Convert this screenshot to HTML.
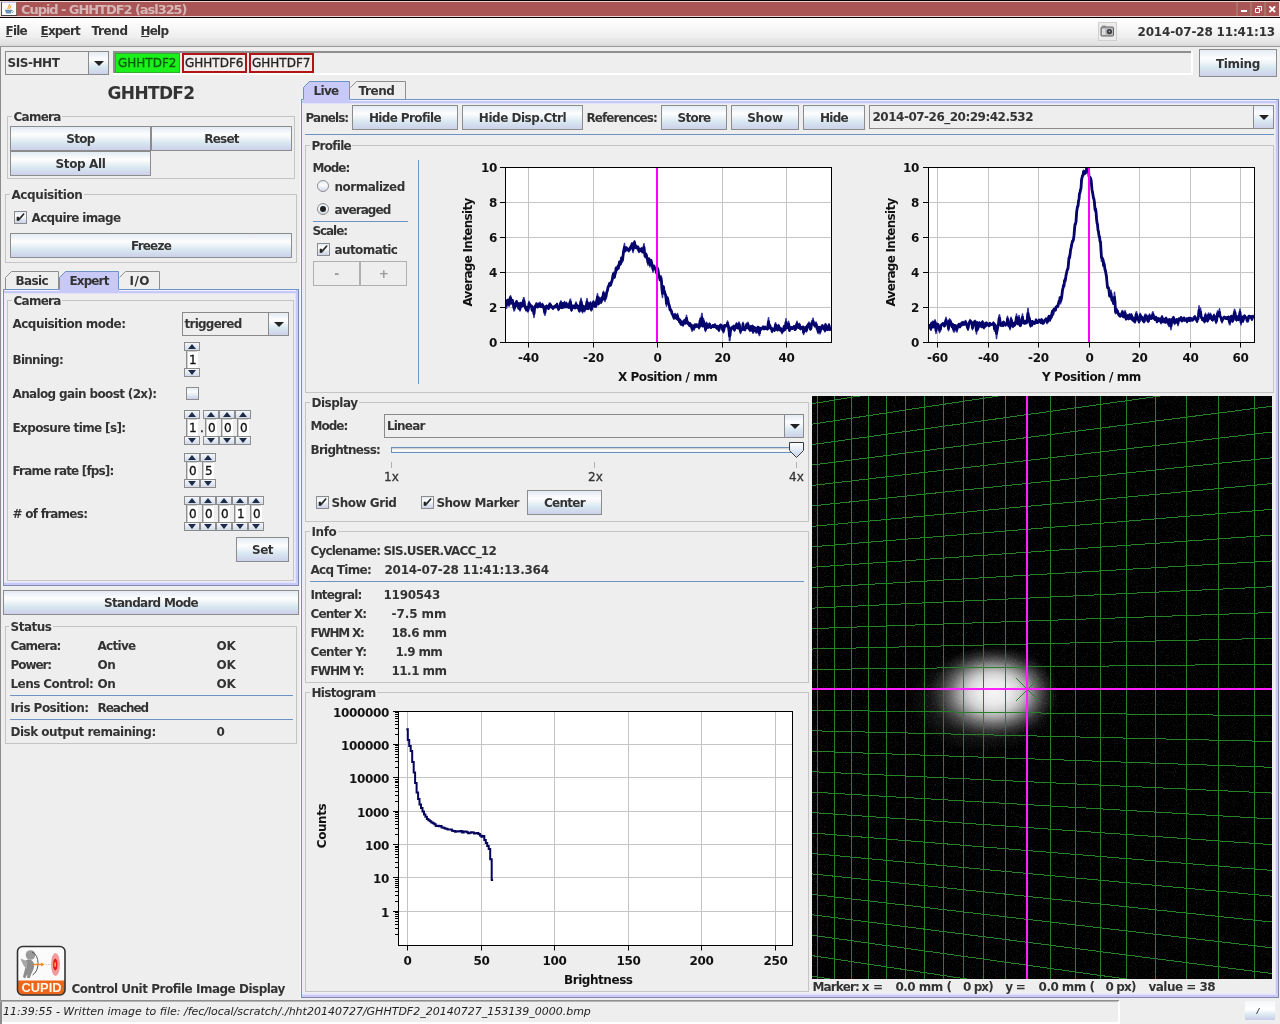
<!DOCTYPE html>
<html><head><meta charset="utf-8"><title>Cupid - GHHTDF2 (asl325)</title>
<style>
html,body{margin:0;padding:0;background:#eee;}
body{width:1280px;height:1024px;overflow:hidden;font-family:'DejaVu Sans','Liberation Sans',sans-serif;font-size:12px;font-weight:bold;color:#333;}
#root{will-change:transform;position:relative;width:1280px;height:1024px;overflow:hidden;background:#eee;}
#root div,#root svg{position:absolute;box-sizing:content-box;}
.t{white-space:pre;letter-spacing:-0.5px;line-height:normal;}
.btn{border:1px solid #8c8c8c;background:linear-gradient(to bottom,#e3ebf4 0%,#fdfdfe 32%,#eef3f8 50%,#d9e9f1 66%,#cdd0ea 100%);}
.btn.dis{border-color:#b0b0b0;background:#eee;}
.cbtn{background:linear-gradient(to bottom,#e3ebf4 0%,#fdfdfe 32%,#eef3f8 50%,#d9e9f1 66%,#cdd0ea 100%);}
.sbtn{border:1px solid #8c8c8c;background:linear-gradient(to bottom,#f4f7fa,#d4dcea);}
.cb{border:1px solid #8c8c8c;background:linear-gradient(to bottom,#e3ebf4 0%,#fdfdfe 35%,#dde6f0 70%,#cdd0ea 100%);}
.rb{border:1px solid #8c8c8c;border-radius:50%;background:linear-gradient(to bottom,#e3ebf4 0%,#fdfdfe 40%,#d0d8ea 100%);}

</style></head>
<body>
<div id="root">
<div style="left:0px;top:0px;width:1280px;height:1px;background:#000;"></div>
<div style="left:0px;top:1px;width:1280px;height:1px;background:#f0d2d2;"></div>
<div style="left:0px;top:2px;width:1280px;height:14px;background:#aa5555;"></div>
<div style="left:0px;top:16px;width:1280px;height:1px;background:#f0d2d2;"></div>
<div style="left:0px;top:17px;width:1280px;height:1px;background:#000;"></div>
<div style="left:0px;top:1px;width:1px;height:16px;background:#efe0d8;"></div>
<div style="left:1px;top:2px;width:16px;height:14px;background:#fdfdfd;"></div>
<div style="left:1px;top:2px;width:1px;height:14px;background:#555;"></div>
<div style="left:16px;top:2px;width:1px;height:14px;background:#8a6a58;"></div>
<div style="left:1px;top:15px;width:16px;height:1px;background:#444;"></div>
<div style="left:2px;top:2px;width:14px;height:1px;background:#c8c8ee;"></div>
<svg style="left:2px;top:3px" width="14" height="12" viewBox="0 0 14 12"><path d="M3.2 7.2 h6.4 l-0.800 3.400 h-4.800 z" fill="#6a94b4"/><path d="M9.600 7.600 c2.400 -0.200 2.400 2.200 0 2" fill="none" stroke="#6a94b4" stroke-width="0.9"/><path d="M3 7.300 h7" stroke="#4a7494" stroke-width="0.8"/><path d="M6.200 6.400 C4.600 4.800 8 3.600 7.400 1 M7.800 6 C7.200 4.800 9.400 3.800 8.800 2.400" fill="none" stroke="#f0a030" stroke-width="1.1"/></svg>
<div class="t" style="left:21.0px;top:2px;font-size:13px;color:#d6b6b6;letter-spacing:-1.056px;">Cupid - GHHTDF2 (asl325)</div>
<div style="left:1236px;top:2px;width:2px;height:14px;background:#a87868;opacity:0.9;"></div>
<div style="left:1250px;top:2px;width:2px;height:14px;background:#a87868;opacity:0.9;"></div>
<div style="left:1264px;top:2px;width:2px;height:14px;background:#a87868;opacity:0.9;"></div>
<div style="left:1279px;top:1px;width:1px;height:16px;background:#efe0d8;"></div>
<div style="left:1241px;top:10px;width:6px;height:2px;background:#fff;"></div>
<svg style="left:1255px;top:6px" width="7" height="7" viewBox="0 0 7 7"><path d="M2.500 1.500 v-1 h4 v4 h-1 M0.500 2.500 h4 v4 h-4 z" fill="none" stroke="#fff" stroke-width="1"/></svg>
<svg style="left:1269px;top:6px" width="7" height="7" viewBox="0 0 7 7"><path d="M1.100 1.100 L5.400 5.400 M5.400 1.100 L1.100 5.400" stroke="#fff" stroke-width="1.9" stroke-linecap="square"/></svg>
<div style="left:0px;top:18px;width:1280px;height:27px;background:linear-gradient(to bottom,#ffffff 0%,#f8f8f8 35%,#eeeeee 70%,#dfdfdf 100%);"></div>
<div style="left:0px;top:45px;width:1280px;height:1px;background:#d8d8d8;"></div>
<div style="left:0px;top:46px;width:1280px;height:1px;background:#9a9a9a;"></div>
<div class="t" style="left:5.5px;top:24px;font-size:12px;letter-spacing:-0.791px;">File</div>
<div class="t" style="left:40.5px;top:24px;font-size:12px;letter-spacing:-0.821px;">Expert</div>
<div class="t" style="left:91.5px;top:24px;font-size:12px;letter-spacing:-0.372px;">Trend</div>
<div class="t" style="left:140.5px;top:24px;font-size:12px;letter-spacing:-0.798px;">Help</div>
<div style="left:6px;top:36px;width:6px;height:1px;background:#333;"></div>
<div style="left:41px;top:36px;width:7px;height:1px;background:#333;"></div>
<div style="left:141px;top:36px;width:8px;height:1px;background:#333;"></div>
<div style="left:1098px;top:22px;width:17px;height:17px;border:1px solid #cfcfcf;background:#ececec;"></div>
<svg style="left:1100px;top:24px" width="15" height="14" viewBox="0 0 15 14"><rect x="1" y="3" width="12.5" height="9" rx="1" fill="#b8b8b8" stroke="#555" stroke-width="0.9"/><rect x="2" y="1.6" width="4" height="2" fill="#888"/><circle cx="9.4" cy="7.6" r="2.6" fill="#333"/><circle cx="9.4" cy="7.6" r="1" fill="#9ab"/><rect x="2" y="5" width="3.2" height="6" fill="#ddd"/></svg>
<div class="t" style="left:1137.5px;top:25px;font-size:12px;letter-spacing:-0.165px;">2014-07-28 11:41:13</div>
<div style="left:0px;top:47px;width:1px;height:977px;background:#8c8c8c;"></div>
<div style="left:5px;top:51px;width:102px;height:22px;border:1px solid #8a8a8a;background:#eee;"></div>
<div class="cbtn" style="left:89px;top:52px;width:19px;height:22px;"></div>
<div style="left:88px;top:52px;width:1px;height:22px;background:#8a8a8a;"></div>
<svg style="position:absolute;left:94px;top:61px" width="10" height="5"><polygon points="0,0 10,0 5.0,5" fill="#222"/></svg>
<div class="t" style="left:7.5px;top:56px;font-size:12px;letter-spacing:-0.431px;">SIS-HHT</div>
<div style="left:113px;top:51px;width:1080px;height:24px;background:#eee;"></div>
<div style="left:113px;top:51px;width:1079px;height:2px;background:#8e8e8e;"></div>
<div style="left:113px;top:51px;width:2px;height:23px;background:#8e8e8e;"></div>
<div style="left:113px;top:73px;width:1080px;height:2px;background:#fff;"></div>
<div style="left:1191px;top:51px;width:2px;height:24px;background:#fff;"></div>
<div style="left:115px;top:53px;width:63px;height:18px;background:#1cf01c;border:1px solid #2cb02c;"></div>
<div class="t" style="left:118px;top:56px;font-size:12px;font-weight:normal;-webkit-text-stroke:0.3px;color:#0c5c0c;letter-spacing:0px;">GHHTDF2</div>
<div style="left:182px;top:53px;width:61px;height:16px;border:2px solid #b01414;background:#f2ecec;"></div>
<div class="t" style="left:185px;top:56px;font-size:12px;font-weight:normal;-webkit-text-stroke:0.3px;color:#222;letter-spacing:0px;">GHHTDF6</div>
<div style="left:249px;top:53px;width:61px;height:16px;border:2px solid #b01414;background:#f2ecec;"></div>
<div class="t" style="left:252px;top:56px;font-size:12px;font-weight:normal;-webkit-text-stroke:0.3px;color:#222;letter-spacing:0px;">GHHTDF7</div>
<div class="btn" style="left:1199px;top:49px;width:76px;height:26px;"></div>
<div class="t" style="left:1199px;top:57px;font-size:12px;letter-spacing:-0.344px;width:78px;text-align:center;">Timing</div>
<div class="t" style="left:107.5px;top:83px;font-size:17px;letter-spacing:-0.65px;">GHHTDF2</div>
<div class="g" style="left:7px;top:116px;width:286px;height:61px;border:1px solid #c4c4c4;"></div>
<div style="left:12px;top:116px;width:50px;height:1px;background:#eee;"></div>
<div class="t" style="left:13.5px;top:110px;font-size:12px;letter-spacing:-0.76px;">Camera</div>
<div class="btn" style="left:10px;top:126px;width:139px;height:23px;"></div>
<div class="t" style="left:10px;top:132px;font-size:12px;letter-spacing:-0.68px;width:141px;text-align:center;">Stop</div>
<div class="btn" style="left:151px;top:126px;width:139px;height:23px;"></div>
<div class="t" style="left:151px;top:132px;font-size:12px;letter-spacing:-0.781px;width:141px;text-align:center;">Reset</div>
<div class="btn" style="left:10px;top:151px;width:139px;height:23px;"></div>
<div class="t" style="left:10px;top:157px;font-size:12px;letter-spacing:-0.363px;width:141px;text-align:center;">Stop All</div>
<div class="g" style="left:5px;top:194px;width:290px;height:67px;border:1px solid #c4c4c4;"></div>
<div style="left:10px;top:194px;width:74px;height:1px;background:#eee;"></div>
<div class="t" style="left:11.5px;top:188px;font-size:12px;letter-spacing:-0.413px;">Acquisition</div>
<div class="cb" style="left:14px;top:211px;width:11px;height:11px;"></div>
<svg style="position:absolute;left:14px;top:211px" width="13" height="13" viewBox="0 0 13 13"><path d="M3 6 L3 9.5 L5 9.5 L10 3.5 L10 2.5 L9 3 L5 7.5 L4.6 6 Z" fill="#222" stroke="#222" stroke-width="0.6"/></svg>
<div class="t" style="left:31.5px;top:211px;font-size:12px;letter-spacing:-0.641px;">Acquire image</div>
<div class="btn" style="left:10px;top:233px;width:280px;height:23px;"></div>
<div class="t" style="left:10px;top:239px;font-size:12px;letter-spacing:-0.792px;width:282px;text-align:center;">Freeze</div>
<div style="left:3px;top:289px;width:296px;height:297px;background:#eee;"></div>
<div style="left:3px;top:290px;width:296px;height:3px;background:#c9c9f8;"></div>
<div style="left:3px;top:293px;width:296px;height:1px;background:#e1e1fc;"></div>
<div style="left:4px;top:290px;width:55px;height:1px;background:#eef3ff;"></div>
<div style="left:119px;top:290px;width:179px;height:1px;background:#eef3ff;"></div>
<div style="left:4px;top:293px;width:2px;height:292px;background:#ebebfd;"></div>
<div style="left:295px;top:293px;width:1px;height:292px;background:#e1e1fc;"></div>
<div style="left:296px;top:290px;width:2px;height:295px;background:#c9c9f8;"></div>
<div style="left:4px;top:581px;width:292px;height:1px;background:#ebebfd;"></div>
<div style="left:4px;top:582px;width:293px;height:1px;background:#e1e1fc;"></div>
<div style="left:4px;top:583px;width:294px;height:2px;background:#c9c9f8;"></div>
<div style="left:3px;top:289px;width:296px;height:1px;background:#6d93c4;"></div>
<div style="left:3px;top:289px;width:1px;height:297px;background:#6d93c4;"></div>
<div style="left:3px;top:585px;width:296px;height:1px;background:#8388ae;"></div>
<div style="left:298px;top:289px;width:1px;height:297px;background:#8388ae;"></div>
<div style="left:2px;top:289px;width:1px;height:297px;background:#f4fbff;"></div>
<svg style="left:5px;top:271px" width="54" height="18"><polygon points="0,18 0,6.5 6.5,0 54,0 54,18" fill="#eee"/><polyline points="0.5,18 0.5,6.5 6.5,0.5 53.5,0.5 53.5,18" fill="none" stroke="#8e8e8e" stroke-width="1"/></svg>
<div class="t" style="left:15.5px;top:274px;font-size:12px;letter-spacing:-0.625px;">Basic</div>
<svg style="left:59px;top:271px" width="60" height="22"><polygon points="0,22 0,6.5 6.5,0 60,0 60,22" fill="#c9c9f8"/><polyline points="0.5,18.5 0.5,6.5 6.5,0.5 59.5,0.5 59.5,18.5" fill="none" stroke="#6d93c4" stroke-width="1"/></svg>
<div class="t" style="left:69.5px;top:274px;font-size:12px;letter-spacing:-0.888px;">Expert</div>
<svg style="left:119px;top:271px" width="41" height="18"><polygon points="0,18 0,6.5 6.5,0 41,0 41,18" fill="#eee"/><polyline points="0.5,6.5 6.5,0.5 40.5,0.5 40.5,18" fill="none" stroke="#8e8e8e" stroke-width="1"/></svg>
<div class="t" style="left:129.5px;top:274px;font-size:12px;letter-spacing:0.513px;">I/O</div>
<div style="left:4px;top:289px;width:55px;height:1px;background:#6d93c4;"></div>
<div style="left:119px;top:289px;width:179px;height:1px;background:#6d93c4;"></div>
<div class="g" style="left:7px;top:300px;width:285px;height:279px;border:1px solid #c4c4c4;"></div>
<div style="left:12px;top:300px;width:50px;height:1px;background:#eee;"></div>
<div class="t" style="left:13.5px;top:294px;font-size:12px;letter-spacing:-0.76px;">Camera</div>
<div class="t" style="left:12.5px;top:317px;font-size:12px;letter-spacing:-0.529px;">Acquisition mode:</div>
<div style="left:182px;top:312px;width:105px;height:22px;border:1px solid #8a8a8a;background:#eee;"></div>
<div class="cbtn" style="left:269px;top:313px;width:19px;height:22px;"></div>
<div style="left:268px;top:313px;width:1px;height:22px;background:#8a8a8a;"></div>
<svg style="position:absolute;left:274px;top:322px" width="10" height="5"><polygon points="0,0 10,0 5.0,5" fill="#222"/></svg>
<div class="t" style="left:184.5px;top:317px;font-size:12px;letter-spacing:-0.748px;">triggered</div>
<div class="t" style="left:12.5px;top:353px;font-size:12px;letter-spacing:-0.736px;">Binning:</div>
<div class="t" style="left:12.5px;top:387px;font-size:12px;letter-spacing:-0.634px;">Analog gain boost (2x):</div>
<div class="t" style="left:12.5px;top:421px;font-size:12px;letter-spacing:-0.627px;">Exposure time [s]:</div>
<div class="t" style="left:12.5px;top:464px;font-size:12px;letter-spacing:-0.827px;">Frame rate [fps]:</div>
<div class="t" style="left:12.5px;top:507px;font-size:12px;letter-spacing:-0.75px;"># of frames:</div>
<div class="sbtn" style="left:184px;top:342px;width:14px;height:7px;"></div>
<svg style="position:absolute;left:188px;top:344px" width="8" height="5"><polygon points="0,5 8,5 4.0,0" fill="#1c2c48"/></svg>
<div style="left:186px;top:351px;width:12px;height:17px;background:#fff;"></div>
<div style="left:186px;top:351px;width:1px;height:17px;background:#8e8e8e;"></div>
<div style="left:187px;top:351px;width:1px;height:17px;background:#cfcfcf;"></div>
<div style="left:187px;top:351px;width:10px;height:1px;background:#cfcfcf;"></div>
<div class="t" style="left:189px;top:353px;font-size:12px;font-weight:normal;-webkit-text-stroke:0.3px;color:#111;letter-spacing:0px;">1</div>
<div class="sbtn" style="left:184px;top:368px;width:14px;height:7px;"></div>
<svg style="position:absolute;left:188px;top:370px" width="8" height="5"><polygon points="0,0 8,0 4.0,5" fill="#1c2c48"/></svg>
<div class="cb" style="left:186px;top:387px;width:11px;height:11px;"></div>
<div class="sbtn" style="left:184px;top:410px;width:14px;height:7px;"></div>
<svg style="position:absolute;left:188px;top:412px" width="8" height="5"><polygon points="0,5 8,5 4.0,0" fill="#1c2c48"/></svg>
<div style="left:186px;top:419px;width:12px;height:17px;background:#fff;"></div>
<div style="left:186px;top:419px;width:1px;height:17px;background:#8e8e8e;"></div>
<div style="left:187px;top:419px;width:1px;height:17px;background:#cfcfcf;"></div>
<div style="left:187px;top:419px;width:10px;height:1px;background:#cfcfcf;"></div>
<div class="t" style="left:189px;top:421px;font-size:12px;font-weight:normal;-webkit-text-stroke:0.3px;color:#111;letter-spacing:0px;">1</div>
<div class="sbtn" style="left:184px;top:436px;width:14px;height:7px;"></div>
<svg style="position:absolute;left:188px;top:438px" width="8" height="5"><polygon points="0,0 8,0 4.0,5" fill="#1c2c48"/></svg>
<div class="t" style="left:200px;top:421px;font-size:12px;font-weight:normal;-webkit-text-stroke:0.3px;color:#111;letter-spacing:0px;">.</div>
<div class="sbtn" style="left:203px;top:410px;width:14px;height:7px;"></div>
<svg style="position:absolute;left:207px;top:412px" width="8" height="5"><polygon points="0,5 8,5 4.0,0" fill="#1c2c48"/></svg>
<div style="left:205px;top:419px;width:12px;height:17px;background:#fff;"></div>
<div style="left:205px;top:419px;width:1px;height:17px;background:#8e8e8e;"></div>
<div style="left:206px;top:419px;width:1px;height:17px;background:#cfcfcf;"></div>
<div style="left:206px;top:419px;width:10px;height:1px;background:#cfcfcf;"></div>
<div class="t" style="left:208px;top:421px;font-size:12px;font-weight:normal;-webkit-text-stroke:0.3px;color:#111;letter-spacing:0px;">0</div>
<div class="sbtn" style="left:203px;top:436px;width:14px;height:7px;"></div>
<svg style="position:absolute;left:207px;top:438px" width="8" height="5"><polygon points="0,0 8,0 4.0,5" fill="#1c2c48"/></svg>
<div class="sbtn" style="left:219px;top:410px;width:14px;height:7px;"></div>
<svg style="position:absolute;left:223px;top:412px" width="8" height="5"><polygon points="0,5 8,5 4.0,0" fill="#1c2c48"/></svg>
<div style="left:221px;top:419px;width:12px;height:17px;background:#fff;"></div>
<div style="left:221px;top:419px;width:1px;height:17px;background:#8e8e8e;"></div>
<div style="left:222px;top:419px;width:1px;height:17px;background:#cfcfcf;"></div>
<div style="left:222px;top:419px;width:10px;height:1px;background:#cfcfcf;"></div>
<div class="t" style="left:224px;top:421px;font-size:12px;font-weight:normal;-webkit-text-stroke:0.3px;color:#111;letter-spacing:0px;">0</div>
<div class="sbtn" style="left:219px;top:436px;width:14px;height:7px;"></div>
<svg style="position:absolute;left:223px;top:438px" width="8" height="5"><polygon points="0,0 8,0 4.0,5" fill="#1c2c48"/></svg>
<div class="sbtn" style="left:235px;top:410px;width:14px;height:7px;"></div>
<svg style="position:absolute;left:239px;top:412px" width="8" height="5"><polygon points="0,5 8,5 4.0,0" fill="#1c2c48"/></svg>
<div style="left:237px;top:419px;width:12px;height:17px;background:#fff;"></div>
<div style="left:237px;top:419px;width:1px;height:17px;background:#8e8e8e;"></div>
<div style="left:238px;top:419px;width:1px;height:17px;background:#cfcfcf;"></div>
<div style="left:238px;top:419px;width:10px;height:1px;background:#cfcfcf;"></div>
<div class="t" style="left:240px;top:421px;font-size:12px;font-weight:normal;-webkit-text-stroke:0.3px;color:#111;letter-spacing:0px;">0</div>
<div class="sbtn" style="left:235px;top:436px;width:14px;height:7px;"></div>
<svg style="position:absolute;left:239px;top:438px" width="8" height="5"><polygon points="0,0 8,0 4.0,5" fill="#1c2c48"/></svg>
<div class="sbtn" style="left:184px;top:453px;width:14px;height:7px;"></div>
<svg style="position:absolute;left:188px;top:455px" width="8" height="5"><polygon points="0,5 8,5 4.0,0" fill="#1c2c48"/></svg>
<div style="left:186px;top:462px;width:12px;height:17px;background:#fff;"></div>
<div style="left:186px;top:462px;width:1px;height:17px;background:#8e8e8e;"></div>
<div style="left:187px;top:462px;width:1px;height:17px;background:#cfcfcf;"></div>
<div style="left:187px;top:462px;width:10px;height:1px;background:#cfcfcf;"></div>
<div class="t" style="left:189px;top:464px;font-size:12px;font-weight:normal;-webkit-text-stroke:0.3px;color:#111;letter-spacing:0px;">0</div>
<div class="sbtn" style="left:184px;top:479px;width:14px;height:7px;"></div>
<svg style="position:absolute;left:188px;top:481px" width="8" height="5"><polygon points="0,0 8,0 4.0,5" fill="#1c2c48"/></svg>
<div class="sbtn" style="left:200px;top:453px;width:14px;height:7px;"></div>
<svg style="position:absolute;left:204px;top:455px" width="8" height="5"><polygon points="0,5 8,5 4.0,0" fill="#1c2c48"/></svg>
<div style="left:202px;top:462px;width:12px;height:17px;background:#fff;"></div>
<div style="left:202px;top:462px;width:1px;height:17px;background:#8e8e8e;"></div>
<div style="left:203px;top:462px;width:1px;height:17px;background:#cfcfcf;"></div>
<div style="left:203px;top:462px;width:10px;height:1px;background:#cfcfcf;"></div>
<div class="t" style="left:205px;top:464px;font-size:12px;font-weight:normal;-webkit-text-stroke:0.3px;color:#111;letter-spacing:0px;">5</div>
<div class="sbtn" style="left:200px;top:479px;width:14px;height:7px;"></div>
<svg style="position:absolute;left:204px;top:481px" width="8" height="5"><polygon points="0,0 8,0 4.0,5" fill="#1c2c48"/></svg>
<div class="sbtn" style="left:184px;top:496px;width:14px;height:7px;"></div>
<svg style="position:absolute;left:188px;top:498px" width="8" height="5"><polygon points="0,5 8,5 4.0,0" fill="#1c2c48"/></svg>
<div style="left:186px;top:505px;width:12px;height:17px;background:#fff;"></div>
<div style="left:186px;top:505px;width:1px;height:17px;background:#8e8e8e;"></div>
<div style="left:187px;top:505px;width:1px;height:17px;background:#cfcfcf;"></div>
<div style="left:187px;top:505px;width:10px;height:1px;background:#cfcfcf;"></div>
<div class="t" style="left:189px;top:507px;font-size:12px;font-weight:normal;-webkit-text-stroke:0.3px;color:#111;letter-spacing:0px;">0</div>
<div class="sbtn" style="left:184px;top:522px;width:14px;height:7px;"></div>
<svg style="position:absolute;left:188px;top:524px" width="8" height="5"><polygon points="0,0 8,0 4.0,5" fill="#1c2c48"/></svg>
<div class="sbtn" style="left:200px;top:496px;width:14px;height:7px;"></div>
<svg style="position:absolute;left:204px;top:498px" width="8" height="5"><polygon points="0,5 8,5 4.0,0" fill="#1c2c48"/></svg>
<div style="left:202px;top:505px;width:12px;height:17px;background:#fff;"></div>
<div style="left:202px;top:505px;width:1px;height:17px;background:#8e8e8e;"></div>
<div style="left:203px;top:505px;width:1px;height:17px;background:#cfcfcf;"></div>
<div style="left:203px;top:505px;width:10px;height:1px;background:#cfcfcf;"></div>
<div class="t" style="left:205px;top:507px;font-size:12px;font-weight:normal;-webkit-text-stroke:0.3px;color:#111;letter-spacing:0px;">0</div>
<div class="sbtn" style="left:200px;top:522px;width:14px;height:7px;"></div>
<svg style="position:absolute;left:204px;top:524px" width="8" height="5"><polygon points="0,0 8,0 4.0,5" fill="#1c2c48"/></svg>
<div class="sbtn" style="left:216px;top:496px;width:14px;height:7px;"></div>
<svg style="position:absolute;left:220px;top:498px" width="8" height="5"><polygon points="0,5 8,5 4.0,0" fill="#1c2c48"/></svg>
<div style="left:218px;top:505px;width:12px;height:17px;background:#fff;"></div>
<div style="left:218px;top:505px;width:1px;height:17px;background:#8e8e8e;"></div>
<div style="left:219px;top:505px;width:1px;height:17px;background:#cfcfcf;"></div>
<div style="left:219px;top:505px;width:10px;height:1px;background:#cfcfcf;"></div>
<div class="t" style="left:221px;top:507px;font-size:12px;font-weight:normal;-webkit-text-stroke:0.3px;color:#111;letter-spacing:0px;">0</div>
<div class="sbtn" style="left:216px;top:522px;width:14px;height:7px;"></div>
<svg style="position:absolute;left:220px;top:524px" width="8" height="5"><polygon points="0,0 8,0 4.0,5" fill="#1c2c48"/></svg>
<div class="sbtn" style="left:232px;top:496px;width:14px;height:7px;"></div>
<svg style="position:absolute;left:236px;top:498px" width="8" height="5"><polygon points="0,5 8,5 4.0,0" fill="#1c2c48"/></svg>
<div style="left:234px;top:505px;width:12px;height:17px;background:#fff;"></div>
<div style="left:234px;top:505px;width:1px;height:17px;background:#8e8e8e;"></div>
<div style="left:235px;top:505px;width:1px;height:17px;background:#cfcfcf;"></div>
<div style="left:235px;top:505px;width:10px;height:1px;background:#cfcfcf;"></div>
<div class="t" style="left:237px;top:507px;font-size:12px;font-weight:normal;-webkit-text-stroke:0.3px;color:#111;letter-spacing:0px;">1</div>
<div class="sbtn" style="left:232px;top:522px;width:14px;height:7px;"></div>
<svg style="position:absolute;left:236px;top:524px" width="8" height="5"><polygon points="0,0 8,0 4.0,5" fill="#1c2c48"/></svg>
<div class="sbtn" style="left:248px;top:496px;width:14px;height:7px;"></div>
<svg style="position:absolute;left:252px;top:498px" width="8" height="5"><polygon points="0,5 8,5 4.0,0" fill="#1c2c48"/></svg>
<div style="left:250px;top:505px;width:12px;height:17px;background:#fff;"></div>
<div style="left:250px;top:505px;width:1px;height:17px;background:#8e8e8e;"></div>
<div style="left:251px;top:505px;width:1px;height:17px;background:#cfcfcf;"></div>
<div style="left:251px;top:505px;width:10px;height:1px;background:#cfcfcf;"></div>
<div class="t" style="left:253px;top:507px;font-size:12px;font-weight:normal;-webkit-text-stroke:0.3px;color:#111;letter-spacing:0px;">0</div>
<div class="sbtn" style="left:248px;top:522px;width:14px;height:7px;"></div>
<svg style="position:absolute;left:252px;top:524px" width="8" height="5"><polygon points="0,0 8,0 4.0,5" fill="#1c2c48"/></svg>
<div class="btn" style="left:236px;top:537px;width:51px;height:23px;"></div>
<div class="t" style="left:236px;top:543px;font-size:12px;width:53px;text-align:center;">Set</div>
<div class="btn" style="left:3px;top:590px;width:294px;height:23px;"></div>
<div class="t" style="left:3px;top:596px;font-size:12px;letter-spacing:-0.716px;width:296px;text-align:center;">Standard Mode</div>
<div class="g" style="left:5px;top:626px;width:290px;height:116px;border:1px solid #c4c4c4;"></div>
<div style="left:9px;top:626px;width:44px;height:1px;background:#eee;"></div>
<div class="t" style="left:10.5px;top:620px;font-size:12px;letter-spacing:-0.484px;">Status</div>
<div class="t" style="left:10.5px;top:639px;font-size:12px;letter-spacing:-0.911px;">Camera:</div>
<div class="t" style="left:97.5px;top:639px;font-size:12px;letter-spacing:-0.703px;">Active</div>
<div class="t" style="left:216.5px;top:639px;font-size:12px;letter-spacing:-0.25px;">OK</div>
<div class="t" style="left:10.5px;top:658px;font-size:12px;letter-spacing:-1.081px;">Power:</div>
<div class="t" style="left:97.5px;top:658px;font-size:12px;letter-spacing:-0.525px;">On</div>
<div class="t" style="left:216.5px;top:658px;font-size:12px;letter-spacing:-0.25px;">OK</div>
<div class="t" style="left:10.5px;top:677px;font-size:12px;letter-spacing:-0.559px;">Lens Control:</div>
<div class="t" style="left:97.5px;top:677px;font-size:12px;letter-spacing:-0.525px;">On</div>
<div class="t" style="left:216.5px;top:677px;font-size:12px;letter-spacing:-0.25px;">OK</div>
<div style="left:10px;top:695px;width:283px;height:1px;background:#6d93c4;"></div>
<div class="t" style="left:10.5px;top:701px;font-size:12px;letter-spacing:-0.539px;">Iris Position:</div>
<div class="t" style="left:97.5px;top:701px;font-size:12px;letter-spacing:-1.025px;">Reached</div>
<div style="left:10px;top:719px;width:283px;height:1px;background:#6d93c4;"></div>
<div class="t" style="left:10.5px;top:725px;font-size:12px;letter-spacing:-0.505px;">Disk output remaining:</div>
<div class="t" style="left:216.5px;top:725px;font-size:12px;">0</div>
<svg style="left:16.4px;top:945px" width="51" height="52" viewBox="0 0 51 52">
<defs><clipPath id="lc"><rect x="1.5" y="1.5" width="47.5" height="48.5" rx="5"/></clipPath></defs>
<rect x="1.5" y="1.5" width="47.5" height="48.5" rx="5" fill="#fbfbfb"/>
<g clip-path="url(#lc)">
<rect x="0" y="35.5" width="51" height="16" fill="#ee661c"/>
<ellipse cx="39.5" cy="19.5" rx="4.4" ry="11.6" fill="#f59a9a"/>
<ellipse cx="39.3" cy="19.5" rx="2.2" ry="6" fill="#e81818"/>
<ellipse cx="39.2" cy="19.5" rx="0.9" ry="2.6" fill="#ffb040"/>
<circle cx="14.5" cy="10" r="4.8" fill="#9a9a9a"/>
<path d="M10 15 C15 13 19 17 18 22 C17 27 15 28 14 33 L11 33 L11.5 29 L9 33.5 L7 32 C8 27 9 25 9.5 21 Z" fill="#8e8e8e"/>
<path d="M4.5 13.5 L11 16 L11 24 C8 22 6 18 4.500 13.5 Z" fill="#a8a8a8"/>
<path d="M16 7 C24 10 24 26 16.500 30" fill="none" stroke="#444" stroke-width="0.9"/>
<path d="M17 19.5 L26 19.500" stroke="#ee8822" stroke-width="1.6"/>
<path d="M25 17.500 L28.500 19.500 L25 21.500 Z" fill="#ee8822"/>
<path d="M29.500 19.500 L35 19.500" stroke="#bbb" stroke-width="0.7" stroke-dasharray="1.500 1"/>
</g>
<rect x="1.500" y="1.500" width="47.500" height="48.500" rx="5" fill="none" stroke="#333" stroke-width="1.6"/>
<text x="25.500" y="47" text-anchor="middle" font-family="'Liberation Sans',sans-serif" font-weight="bold" font-size="12.500" fill="#fff8e8" textLength="40" lengthAdjust="spacingAndGlyphs">CUPID</text>
</svg>
<div class="t" style="left:71.5px;top:982px;font-size:12px;letter-spacing:-0.495px;">Control Unit Profile Image Display</div>
<div style="left:0px;top:1000px;width:1119px;height:1px;background:#8e8e8e;"></div>
<div style="left:0px;top:1001px;width:1119px;height:1px;background:#b4b4b4;"></div>
<div style="left:1px;top:1001px;width:1px;height:23px;background:#8e8e8e;"></div>
<div style="left:1118px;top:1001px;width:2px;height:23px;background:#fff;"></div>
<div style="left:2px;top:1022px;width:1118px;height:2px;background:#fff;"></div>
<div class="t" style="left:3px;top:1005px;font-size:11px;font-weight:normal;font-style:italic;color:#222;letter-spacing:0px;">11:39:55 - Written image to file: /fec/local/scratch/./hht20140727/GHHTDF2_20140727_153139_0000.bmp</div>
<div style="left:1245px;top:1001px;width:30px;height:19px;background:linear-gradient(to bottom,#f4f7fb 0%,#ffffff 45%,#d8e6f0 75%,#c8cce8 100%);"></div>
<svg style="left:1254px;top:1006px" width="10" height="10"><path d="M2.5 8 L5.500 2" stroke="#444" stroke-width="1"/></svg>
<div style="left:301px;top:99px;width:978px;height:899px;background:#eee;"></div>
<div style="left:301px;top:100px;width:978px;height:3px;background:#c9c9f8;"></div>
<div style="left:301px;top:103px;width:978px;height:1px;background:#e1e1fc;"></div>
<div style="left:302px;top:100px;width:1px;height:1px;background:#eef3ff;"></div>
<div style="left:350px;top:100px;width:928px;height:1px;background:#eef3ff;"></div>
<div style="left:302px;top:103px;width:2px;height:894px;background:#ebebfd;"></div>
<div style="left:1275px;top:103px;width:1px;height:894px;background:#e1e1fc;"></div>
<div style="left:1276px;top:100px;width:2px;height:897px;background:#c9c9f8;"></div>
<div style="left:302px;top:993px;width:974px;height:1px;background:#ebebfd;"></div>
<div style="left:302px;top:994px;width:975px;height:1px;background:#e1e1fc;"></div>
<div style="left:302px;top:995px;width:976px;height:2px;background:#c9c9f8;"></div>
<div style="left:301px;top:99px;width:978px;height:1px;background:#6d93c4;"></div>
<div style="left:301px;top:99px;width:1px;height:899px;background:#6d93c4;"></div>
<div style="left:301px;top:997px;width:978px;height:1px;background:#8388ae;"></div>
<div style="left:1278px;top:99px;width:1px;height:899px;background:#8388ae;"></div>
<div style="left:300px;top:99px;width:1px;height:899px;background:#f4fbff;"></div>
<svg style="left:303px;top:81px" width="47" height="22"><polygon points="0,22 0,6.5 6.5,0 47,0 47,22" fill="#c9c9f8"/><polyline points="0.5,18.5 0.5,6.5 6.5,0.5 46.5,0.5 46.5,18.5" fill="none" stroke="#6d93c4" stroke-width="1"/></svg>
<div class="t" style="left:313.5px;top:84px;font-size:12px;letter-spacing:-0.684px;">Live</div>
<svg style="left:350px;top:81px" width="56" height="18"><polygon points="0,18 0,6.5 6.5,0 56,0 56,18" fill="#eee"/><polyline points="0.5,6.5 6.5,0.5 55.5,0.5 55.5,18" fill="none" stroke="#8e8e8e" stroke-width="1"/></svg>
<div class="t" style="left:358.5px;top:84px;font-size:12px;letter-spacing:-0.412px;">Trend</div>
<div style="left:350px;top:99px;width:928px;height:1px;background:#6d93c4;"></div>
<div class="t" style="left:305.5px;top:111px;font-size:12px;letter-spacing:-0.945px;">Panels:</div>
<div class="btn" style="left:352px;top:105px;width:104px;height:23px;"></div>
<div class="t" style="left:352px;top:111px;font-size:12px;letter-spacing:-0.614px;width:106px;text-align:center;">Hide Profile</div>
<div class="btn" style="left:462px;top:105px;width:119px;height:23px;"></div>
<div class="t" style="left:462px;top:111px;font-size:12px;letter-spacing:-0.48px;width:121px;text-align:center;">Hide Disp.Ctrl</div>
<div class="t" style="left:586.5px;top:111px;font-size:12px;letter-spacing:-0.921px;">References:</div>
<div class="btn" style="left:661px;top:105px;width:64px;height:23px;"></div>
<div class="t" style="left:661px;top:111px;font-size:12px;letter-spacing:-0.738px;width:66px;text-align:center;">Store</div>
<div class="btn" style="left:731px;top:105px;width:66px;height:23px;"></div>
<div class="t" style="left:731px;top:111px;font-size:12px;letter-spacing:-0.204px;width:68px;text-align:center;">Show</div>
<div class="btn" style="left:803px;top:105px;width:60px;height:23px;"></div>
<div class="t" style="left:803px;top:111px;font-size:12px;letter-spacing:-0.673px;width:62px;text-align:center;">Hide</div>
<div style="left:869px;top:105px;width:403px;height:22px;border:1px solid #8a8a8a;background:#eee;"></div>
<div class="cbtn" style="left:1254px;top:106px;width:19px;height:22px;"></div>
<div style="left:1253px;top:106px;width:1px;height:22px;background:#8a8a8a;"></div>
<svg style="position:absolute;left:1259px;top:115px" width="10" height="5"><polygon points="0,0 10,0 5.0,5" fill="#222"/></svg>
<div class="t" style="left:872.5px;top:110px;font-size:12px;">2014-07-26_20:29:42.532</div>
<div style="left:305px;top:134px;width:969px;height:1px;background:#6d93c4;"></div>
<div class="g" style="left:305px;top:145px;width:967px;height:246px;border:1px solid #c4c4c4;"></div>
<div style="left:310px;top:145px;width:42px;height:1px;background:#eee;"></div>
<div class="t" style="left:311.5px;top:139px;font-size:12px;letter-spacing:-0.73px;">Profile</div>
<div class="t" style="left:312.5px;top:161px;font-size:12px;letter-spacing:-0.984px;">Mode:</div>
<div class="rb" style="left:317px;top:180px;width:10px;height:10px;"></div>
<div class="t" style="left:334.5px;top:180px;font-size:12px;letter-spacing:-0.495px;">normalized</div>
<div class="rb" style="left:317px;top:203px;width:10px;height:10px;"></div>
<div style="left:320px;top:206px;width:6px;height:6px;background:#222;border-radius:50%;"></div>
<div class="t" style="left:334.5px;top:203px;font-size:12px;letter-spacing:-0.951px;">averaged</div>
<div style="left:313px;top:221px;width:95px;height:1px;background:#6d93c4;"></div>
<div class="t" style="left:312.5px;top:224px;font-size:12px;letter-spacing:-1.084px;">Scale:</div>
<div class="cb" style="left:317px;top:243px;width:11px;height:11px;"></div>
<svg style="position:absolute;left:317px;top:243px" width="13" height="13" viewBox="0 0 13 13"><path d="M3 6 L3 9.5 L5 9.5 L10 3.5 L10 2.5 L9 3 L5 7.5 L4.6 6 Z" fill="#222" stroke="#222" stroke-width="0.6"/></svg>
<div class="t" style="left:334.5px;top:243px;font-size:12px;letter-spacing:-0.599px;">automatic</div>
<div class="btn dis" style="left:313px;top:261px;width:45px;height:23px;"></div>
<div class="t" style="left:313px;top:267px;font-size:12px;color:#999;width:47px;text-align:center;">-</div>
<div class="btn dis" style="left:360px;top:261px;width:45px;height:23px;"></div>
<div class="t" style="left:360px;top:267px;font-size:12px;color:#999;width:47px;text-align:center;">+</div>
<div style="left:418px;top:160px;width:1px;height:224px;background:#6d93c4;"></div>
<svg style="left:455px;top:157px" width="397" height="226" viewBox="455 157 397 226" font-family="'DejaVu Sans','Liberation Sans',sans-serif" font-weight="bold" font-size="12" fill="#111">
<rect x="505.5" y="167.5" width="326" height="175" fill="#fff" stroke="none"/>
<path d="M500 342.5 H505" stroke="#000" stroke-width="1"/>
<text x="497" y="347" text-anchor="end" letter-spacing="-0.4">0</text>
<path d="M506 307.5 H831" stroke="#c4c4c4" stroke-width="1"/>
<path d="M500 307.5 H505" stroke="#000" stroke-width="1"/>
<text x="497" y="312" text-anchor="end" letter-spacing="-0.4">2</text>
<path d="M506 272.5 H831" stroke="#c4c4c4" stroke-width="1"/>
<path d="M500 272.5 H505" stroke="#000" stroke-width="1"/>
<text x="497" y="277" text-anchor="end" letter-spacing="-0.4">4</text>
<path d="M506 237.5 H831" stroke="#c4c4c4" stroke-width="1"/>
<path d="M500 237.5 H505" stroke="#000" stroke-width="1"/>
<text x="497" y="242" text-anchor="end" letter-spacing="-0.4">6</text>
<path d="M506 202.5 H831" stroke="#c4c4c4" stroke-width="1"/>
<path d="M500 202.5 H505" stroke="#000" stroke-width="1"/>
<text x="497" y="207" text-anchor="end" letter-spacing="-0.4">8</text>
<path d="M500 167.5 H505" stroke="#000" stroke-width="1"/>
<text x="497" y="172" text-anchor="end" letter-spacing="-0.4">10</text>
<path d="M528.5 168 V342" stroke="#c4c4c4" stroke-width="1"/>
<path d="M528.5 342 V347.5" stroke="#000" stroke-width="1"/>
<text x="528.5" y="362" text-anchor="middle" letter-spacing="-0.3">-40</text>
<path d="M593.5 168 V342" stroke="#c4c4c4" stroke-width="1"/>
<path d="M593.5 342 V347.5" stroke="#000" stroke-width="1"/>
<text x="593.5" y="362" text-anchor="middle" letter-spacing="-0.3">-20</text>
<path d="M657.5 342 V347.5" stroke="#000" stroke-width="1"/>
<text x="657.5" y="362" text-anchor="middle" letter-spacing="-0.3">0</text>
<path d="M722.5 168 V342" stroke="#c4c4c4" stroke-width="1"/>
<path d="M722.5 342 V347.5" stroke="#000" stroke-width="1"/>
<text x="722.5" y="362" text-anchor="middle" letter-spacing="-0.3">20</text>
<path d="M786.5 168 V342" stroke="#c4c4c4" stroke-width="1"/>
<path d="M786.5 342 V347.5" stroke="#000" stroke-width="1"/>
<text x="786.5" y="362" text-anchor="middle" letter-spacing="-0.3">40</text>
<clipPath id="cp11"><rect x="506" y="168" width="325" height="174"/></clipPath>
<g clip-path="url(#cp11)">
<path d="M506.0 305.7 L506.5 308.1 L507.0 302.0 L507.5 300.0 L508.0 299.9 L508.5 303.5 L509.0 306.1 L509.5 305.1 L510.0 296.6 L510.5 295.8 L511.0 299.8 L511.5 303.6 L512.0 299.6 L512.5 299.6 L513.0 303.1 L513.5 306.6 L514.0 310.9 L514.5 310.6 L515.0 307.0 L515.5 303.7 L516.0 303.8 L516.5 300.5 L517.0 301.8 L517.5 306.7 L518.0 306.3 L518.5 309.3 L519.0 303.0 L519.5 306.2 L520.0 311.0 L520.5 307.1 L521.0 302.4 L521.5 303.8 L522.0 302.7 L522.5 306.1 L523.0 304.7 L523.5 297.7 L524.0 297.7 L524.5 303.6 L525.0 305.5 L525.5 308.6 L526.0 310.8 L526.5 310.6 L527.0 307.9 L527.5 311.4 L528.0 312.0 L528.5 308.2 L529.0 301.4 L529.5 303.0 L530.0 304.1 L530.5 305.7 L531.0 305.7 L531.5 305.4 L532.0 311.3 L532.5 310.0 L533.0 307.6 L533.5 312.6 L534.0 317.5 L534.5 309.7 L535.0 305.8 L535.5 306.9 L536.0 303.2 L536.5 302.8 L537.0 305.4 L537.5 306.8 L538.0 304.8 L538.5 303.1 L539.0 306.0 L539.5 304.8 L540.0 302.3 L540.5 303.6 L541.0 306.1 L541.5 305.7 L542.0 304.2 L542.5 303.4 L543.0 307.1 L543.5 305.5 L544.0 308.7 L544.5 314.1 L545.0 315.3 L545.5 308.7 L546.0 306.9 L546.5 305.3 L547.0 307.3 L547.5 307.3 L548.0 308.5 L548.5 309.2 L549.0 305.9 L549.5 303.1 L550.0 303.0 L550.5 303.7 L551.0 304.8 L551.5 307.3 L552.0 307.0 L552.5 306.8 L553.0 309.2 L553.5 308.2 L554.0 306.8 L554.5 306.1 L555.0 306.9 L555.5 305.4 L556.0 307.2 L556.5 306.7 L557.0 303.3 L557.5 306.9 L558.0 307.7 L558.5 310.5 L559.0 308.9 L559.5 308.8 L560.0 307.3 L560.5 301.9 L561.0 300.9 L561.5 302.8 L562.0 308.4 L562.5 302.9 L563.0 302.9 L563.5 306.1 L564.0 307.4 L564.5 301.5 L565.0 307.0 L565.5 307.0 L566.0 307.2 L566.5 302.4 L567.0 304.9 L567.5 305.5 L568.0 307.0 L568.5 304.3 L569.0 307.8 L569.5 302.7 L570.0 299.8 L570.5 299.1 L571.0 306.6 L571.5 311.2 L572.0 307.1 L572.5 308.0 L573.0 305.2 L573.5 305.6 L574.0 306.0 L574.5 307.1 L575.0 308.3 L575.5 304.4 L576.0 302.1 L576.5 304.7 L577.0 305.5 L577.5 307.8 L578.0 305.3 L578.5 306.5 L579.0 311.3 L579.5 312.1 L580.0 310.0 L580.5 301.2 L581.0 298.4 L581.5 301.2 L582.0 307.3 L582.5 312.8 L583.0 308.0 L583.5 305.6 L584.0 306.6 L584.5 311.6 L585.0 309.0 L585.5 308.9 L586.0 309.1 L586.5 303.8 L587.0 298.5 L587.5 306.8 L588.0 309.4 L588.5 302.7 L589.0 303.1 L589.5 305.7 L590.0 308.4 L590.5 301.7 L591.0 310.6 L591.5 310.8 L592.0 308.2 L592.5 304.9 L593.0 302.7 L593.5 300.7 L594.0 304.0 L594.5 306.9 L595.0 305.1 L595.5 305.0 L596.0 307.2 L596.5 300.7 L597.0 298.1 L597.5 293.7 L598.0 301.0 L598.5 304.6 L599.0 301.7 L599.5 297.4 L600.0 300.8 L600.5 298.8 L601.0 303.4 L601.5 301.2 L602.0 297.1 L602.5 300.1 L603.0 295.8 L603.5 291.4 L604.0 296.3 L604.5 300.5 L605.0 301.4 L605.5 297.1 L606.0 298.8 L606.5 293.8 L607.0 291.7 L607.5 290.6 L608.0 286.5 L608.5 286.0 L609.0 284.1 L609.5 282.6 L610.0 283.5 L610.5 285.9 L611.0 284.4 L611.5 282.1 L612.0 281.1 L612.5 278.2 L613.0 273.7 L613.5 272.2 L614.0 274.4 L614.5 278.2 L615.0 274.2 L615.5 273.4 L616.0 267.0 L616.5 270.6 L617.0 268.8 L617.5 269.1 L618.0 265.8 L618.5 269.3 L619.0 265.5 L619.5 261.6 L620.0 262.9 L620.5 265.1 L621.0 264.3 L621.5 257.5 L622.0 259.9 L622.5 261.8 L623.0 256.2 L623.5 250.3 L624.0 246.9 L624.5 243.6 L625.0 250.5 L625.5 249.0 L626.0 248.3 L626.5 246.9 L627.0 249.2 L627.5 250.0 L628.0 249.9 L628.5 251.6 L629.0 251.6 L629.5 250.7 L630.0 248.5 L630.5 249.0 L631.0 246.8 L631.5 246.7 L632.0 243.1 L632.5 244.4 L633.0 252.4 L633.5 248.4 L634.0 242.7 L634.5 240.7 L635.0 246.6 L635.5 248.2 L636.0 245.8 L636.5 248.6 L637.0 247.9 L637.5 248.1 L638.0 246.8 L638.5 250.4 L639.0 252.5 L639.5 250.8 L640.0 249.1 L640.5 251.0 L641.0 251.3 L641.5 247.8 L642.0 250.1 L642.5 252.2 L643.0 251.4 L643.5 246.2 L644.0 243.7 L644.5 251.8 L645.0 256.7 L645.5 257.3 L646.0 253.2 L646.5 255.2 L647.0 259.3 L647.5 260.3 L648.0 265.1 L648.5 259.4 L649.0 258.7 L649.5 260.9 L650.0 266.9 L650.5 262.9 L651.0 259.8 L651.5 262.6 L652.0 265.1 L652.5 268.0 L653.0 272.2 L653.5 267.8 L654.0 266.0 L654.5 267.7 L655.0 269.1 L655.5 268.4 L656.0 271.1 L656.5 274.1 L657.0 272.9 L657.5 271.7 L658.0 267.6 L658.5 273.6 L659.0 275.9 L659.5 277.6 L660.0 280.7 L660.5 280.1 L661.0 275.9 L661.5 281.0 L662.0 293.0 L662.5 297.4 L663.0 289.3 L663.5 285.7 L664.0 292.1 L664.5 291.1 L665.0 293.8 L665.5 294.3 L666.0 298.6 L666.5 306.1 L667.0 303.7 L667.5 296.6 L668.0 298.7 L668.5 303.2 L669.0 304.1 L669.5 306.2 L670.0 310.6 L670.5 309.2 L671.0 310.2 L671.5 311.3 L672.0 314.4 L672.5 314.4 L673.0 316.1 L673.5 317.2 L674.0 319.0 L674.5 315.1 L675.0 313.5 L675.5 317.1 L676.0 314.7 L676.5 318.1 L677.0 316.6 L677.5 313.5 L678.0 319.3 L678.5 317.8 L679.0 319.1 L679.5 322.4 L680.0 319.3 L680.5 324.0 L681.0 325.2 L681.5 323.0 L682.0 321.7 L682.5 324.4 L683.0 325.9 L683.5 322.2 L684.0 321.3 L684.5 319.4 L685.0 321.3 L685.5 323.1 L686.0 320.8 L686.5 315.4 L687.0 319.6 L687.5 321.5 L688.0 323.3 L688.5 324.3 L689.0 322.6 L689.5 326.2 L690.0 323.1 L690.5 326.9 L691.0 324.7 L691.5 325.6 L692.0 331.2 L692.5 329.4 L693.0 327.8 L693.5 326.7 L694.0 330.1 L694.5 326.6 L695.0 324.7 L695.5 327.4 L696.0 325.1 L696.5 324.5 L697.0 326.8 L697.5 326.9 L698.0 324.9 L698.5 324.6 L699.0 328.7 L699.5 326.8 L700.0 318.4 L700.5 324.8 L701.0 325.5 L701.5 315.2 L702.0 313.4 L702.5 322.0 L703.0 326.4 L703.5 318.8 L704.0 321.6 L704.5 323.0 L705.0 325.3 L705.5 331.4 L706.0 328.3 L706.5 322.4 L707.0 327.9 L707.5 325.7 L708.0 327.9 L708.5 327.6 L709.0 325.6 L709.5 323.1 L710.0 324.0 L710.5 327.5 L711.0 328.0 L711.5 326.7 L712.0 326.8 L712.5 326.6 L713.0 324.9 L713.5 326.8 L714.0 325.3 L714.5 326.0 L715.0 324.0 L715.5 326.9 L716.0 327.7 L716.5 326.4 L717.0 329.0 L717.5 325.9 L718.0 328.0 L718.5 330.5 L719.0 331.5 L719.5 328.1 L720.0 324.9 L720.5 324.2 L721.0 324.3 L721.5 326.3 L722.0 325.4 L722.5 330.7 L723.0 331.6 L723.5 332.8 L724.0 330.3 L724.5 324.8 L725.0 325.0 L725.5 324.8 L726.0 325.4 L726.5 324.4 L727.0 324.5 L727.5 321.0 L728.0 323.3 L728.5 326.7 L729.0 332.5 L729.5 340.7 L730.0 340.0 L730.5 331.3 L731.0 330.9 L731.5 327.8 L732.0 329.0 L732.5 326.8 L733.0 327.8 L733.5 327.2 L734.0 325.4 L734.5 331.1 L735.0 326.9 L735.5 326.9 L736.0 327.8 L736.5 322.8 L737.0 323.6 L737.5 325.2 L738.0 328.4 L738.5 325.1 L739.0 322.1 L739.5 324.3 L740.0 330.6 L740.5 333.5 L741.0 331.0 L741.5 329.5 L742.0 330.4 L742.5 328.7 L743.0 322.3 L743.5 330.1 L744.0 327.2 L744.5 327.3 L745.0 330.6 L745.5 328.3 L746.0 328.2 L746.5 323.3 L747.0 326.6 L747.5 325.2 L748.0 322.2 L748.5 328.5 L749.0 328.6 L749.5 330.1 L750.0 331.3 L750.5 325.9 L751.0 329.0 L751.5 330.8 L752.0 326.2 L752.5 325.4 L753.0 333.3 L753.5 332.4 L754.0 327.1 L754.5 328.7 L755.0 330.1 L755.5 328.0 L756.0 332.9 L756.5 332.4 L757.0 332.8 L757.5 331.0 L758.0 326.6 L758.5 327.4 L759.0 334.6 L759.5 335.5 L760.0 328.1 L760.5 328.9 L761.0 330.0 L761.5 328.8 L762.0 328.3 L762.5 327.8 L763.0 326.3 L763.5 328.4 L764.0 329.3 L764.5 328.9 L765.0 326.4 L765.5 327.8 L766.0 328.9 L766.5 329.0 L767.0 328.3 L767.5 329.5 L768.0 323.3 L768.5 317.9 L769.0 323.4 L769.5 327.0 L770.0 324.4 L770.5 328.1 L771.0 329.1 L771.5 327.8 L772.0 332.5 L772.5 329.5 L773.0 329.4 L773.5 329.5 L774.0 328.8 L774.5 331.2 L775.0 327.3 L775.5 322.7 L776.0 325.0 L776.5 327.6 L777.0 329.7 L777.5 330.6 L778.0 329.7 L778.5 324.5 L779.0 325.7 L779.5 328.0 L780.0 330.7 L780.5 328.5 L781.0 328.7 L781.5 331.1 L782.0 333.7 L782.5 330.2 L783.0 331.8 L783.5 331.5 L784.0 325.6 L784.5 326.7 L785.0 330.0 L785.5 324.7 L786.0 318.9 L786.5 324.6 L787.0 327.3 L787.5 325.9 L788.0 326.4 L788.5 321.3 L789.0 324.1 L789.5 331.3 L790.0 329.7 L790.5 328.8 L791.0 327.1 L791.5 328.4 L792.0 326.9 L792.5 328.5 L793.0 327.2 L793.5 327.6 L794.0 325.6 L794.5 326.7 L795.0 330.3 L795.5 329.4 L796.0 328.3 L796.5 323.6 L797.0 321.3 L797.5 325.4 L798.0 324.1 L798.5 327.6 L799.0 325.3 L799.5 323.4 L800.0 326.9 L800.5 329.4 L801.0 327.1 L801.5 327.1 L802.0 328.8 L802.5 326.8 L803.0 326.6 L803.5 334.4 L804.0 333.1 L804.5 331.8 L805.0 328.5 L805.5 327.5 L806.0 331.1 L806.5 331.9 L807.0 326.1 L807.5 324.7 L808.0 325.4 L808.5 322.9 L809.0 322.2 L809.5 325.9 L810.0 329.4 L810.5 330.1 L811.0 328.9 L811.5 322.7 L812.0 320.5 L812.5 320.5 L813.0 318.2 L813.5 321.4 L814.0 323.4 L814.5 322.5 L815.0 325.6 L815.5 323.1 L816.0 322.0 L816.5 324.4 L817.0 328.9 L817.5 328.2 L818.0 333.5 L818.5 330.6 L819.0 326.9 L819.5 327.7 L820.0 333.9 L820.5 331.7 L821.0 328.5 L821.5 326.6 L822.0 325.2 L822.5 324.8 L823.0 327.2 L823.5 329.5 L824.0 328.9 L824.5 329.0 L825.0 331.8 L825.5 323.6 L826.0 326.4 L826.5 327.9 L827.0 329.5 L827.5 330.5 L828.0 330.1 L828.5 325.5 L829.0 323.8 L829.5 327.7 L830.0 330.3 L830.5 327.5" fill="none" stroke="#34349c" stroke-width="1.6" stroke-linejoin="round"/>
<path d="M506.0 303.7 L506.5 305.3 L507.0 301.4 L507.5 300.2 L508.0 300.2 L508.5 302.5 L509.0 304.3 L509.5 303.7 L510.0 298.3 L510.5 297.8 L511.0 300.4 L511.5 303.0 L512.0 300.5 L512.5 300.5 L513.0 302.9 L513.5 305.2 L514.0 308.1 L514.5 308.0 L515.0 305.7 L515.5 303.7 L516.0 303.8 L516.5 301.7 L517.0 302.7 L517.5 305.9 L518.0 305.7 L518.5 307.7 L519.0 303.7 L519.5 305.8 L520.0 309.0 L520.5 306.5 L521.0 303.5 L521.5 304.5 L522.0 303.8 L522.5 306.0 L523.0 305.1 L523.5 300.7 L524.0 300.7 L524.5 304.6 L525.0 305.8 L525.5 307.8 L526.0 309.3 L526.5 309.1 L527.0 307.5 L527.5 309.7 L528.0 310.2 L528.5 307.7 L529.0 303.3 L529.5 304.4 L530.0 305.1 L530.5 306.2 L531.0 306.2 L531.5 306.0 L532.0 309.8 L532.5 309.0 L533.0 307.5 L533.5 310.7 L534.0 313.9 L534.5 308.9 L535.0 306.3 L535.5 307.0 L536.0 304.7 L536.5 304.5 L537.0 306.1 L537.5 307.0 L538.0 305.8 L538.5 304.7 L539.0 306.5 L539.5 305.8 L540.0 304.2 L540.5 305.0 L541.0 306.7 L541.5 306.4 L542.0 305.4 L542.5 304.9 L543.0 307.3 L543.5 306.3 L544.0 308.4 L544.5 311.8 L545.0 312.6 L545.5 308.4 L546.0 307.2 L546.5 306.1 L547.0 307.4 L547.5 307.4 L548.0 308.1 L548.5 308.6 L549.0 306.4 L549.5 304.6 L550.0 304.6 L550.5 305.0 L551.0 305.6 L551.5 307.3 L552.0 307.0 L552.5 306.9 L553.0 308.4 L553.5 307.8 L554.0 306.8 L554.5 306.4 L555.0 306.8 L555.5 305.8 L556.0 307.0 L556.5 306.6 L557.0 304.4 L557.5 306.8 L558.0 307.3 L558.5 309.0 L559.0 308.0 L559.5 307.9 L560.0 307.0 L560.5 303.5 L561.0 302.8 L561.5 304.0 L562.0 307.7 L562.5 304.1 L563.0 304.1 L563.5 306.2 L564.0 307.1 L564.5 303.2 L565.0 306.8 L565.5 306.9 L566.0 307.0 L566.5 304.0 L567.0 305.5 L567.5 306.0 L568.0 307.0 L568.5 305.2 L569.0 307.5 L569.5 304.2 L570.0 302.4 L570.5 302.0 L571.0 306.8 L571.5 309.8 L572.0 307.2 L572.5 307.8 L573.0 306.0 L573.5 306.2 L574.0 306.5 L574.5 307.3 L575.0 308.1 L575.5 305.5 L576.0 304.1 L576.5 305.8 L577.0 306.3 L577.5 307.8 L578.0 306.1 L578.5 307.0 L579.0 310.0 L579.5 310.6 L580.0 309.2 L580.5 303.5 L581.0 301.7 L581.5 303.5 L582.0 307.4 L582.5 310.9 L583.0 307.8 L583.5 306.3 L584.0 306.9 L584.5 310.1 L585.0 308.4 L585.5 308.3 L586.0 308.4 L586.5 305.0 L587.0 301.6 L587.5 306.9 L588.0 308.6 L588.5 304.2 L589.0 304.5 L589.5 306.1 L590.0 307.8 L590.5 303.4 L591.0 309.1 L591.5 309.1 L592.0 307.4 L592.5 305.2 L593.0 303.6 L593.5 302.3 L594.0 304.3 L594.5 306.1 L595.0 304.9 L595.5 304.7 L596.0 306.0 L596.5 301.7 L597.0 299.9 L597.5 297.0 L598.0 301.6 L598.5 303.8 L599.0 301.7 L599.5 298.8 L600.0 300.8 L600.5 299.4 L601.0 302.1 L601.5 300.5 L602.0 297.6 L602.5 299.4 L603.0 296.3 L603.5 293.2 L604.0 296.2 L604.5 298.6 L605.0 298.9 L605.5 295.8 L606.0 296.7 L606.5 293.1 L607.0 291.5 L607.5 290.4 L608.0 287.3 L608.5 286.7 L609.0 285.1 L609.5 283.7 L610.0 283.9 L610.5 285.1 L611.0 283.8 L611.5 281.9 L612.0 280.8 L612.5 278.6 L613.0 275.3 L613.5 273.9 L614.0 274.9 L614.5 276.9 L615.0 273.9 L615.5 272.9 L616.0 268.3 L616.5 270.3 L617.0 268.7 L617.5 268.4 L618.0 265.9 L618.5 267.8 L619.0 264.9 L619.5 262.0 L620.0 262.5 L620.5 263.6 L621.0 262.7 L621.5 258.0 L622.0 259.1 L622.5 260.0 L623.0 256.1 L623.5 252.0 L624.0 249.5 L624.5 247.1 L625.0 251.2 L625.5 249.9 L626.0 249.2 L626.5 248.1 L627.0 249.4 L627.5 249.6 L628.0 249.4 L628.5 250.3 L629.0 250.1 L629.5 249.4 L630.0 247.7 L630.5 247.9 L631.0 246.4 L631.5 246.2 L632.0 243.9 L632.5 244.7 L633.0 249.8 L633.5 247.3 L634.0 243.6 L634.5 242.4 L635.0 246.3 L635.5 247.4 L636.0 245.9 L636.5 247.9 L637.0 247.5 L637.5 247.8 L638.0 247.0 L638.5 249.5 L639.0 251.0 L639.5 250.1 L640.0 249.2 L640.5 250.6 L641.0 250.9 L641.5 248.9 L642.0 250.6 L642.5 252.1 L643.0 251.8 L643.5 248.6 L644.0 247.2 L644.5 252.6 L645.0 256.0 L645.5 256.5 L646.0 254.1 L646.5 255.6 L647.0 258.4 L647.5 259.2 L648.0 262.5 L648.5 259.1 L649.0 258.8 L649.5 260.4 L650.0 264.5 L650.5 262.2 L651.0 260.4 L651.5 262.4 L652.0 264.3 L652.5 266.4 L653.0 269.4 L653.5 266.8 L654.0 266.0 L654.5 267.3 L655.0 268.5 L655.5 268.4 L656.0 270.4 L656.5 272.7 L657.0 272.3 L657.5 271.9 L658.0 269.6 L658.5 273.9 L659.0 275.8 L659.5 277.3 L660.0 279.9 L660.5 279.9 L661.0 277.8 L661.5 281.6 L662.0 289.9 L662.5 293.3 L663.0 288.6 L663.5 286.8 L664.0 291.5 L664.5 291.4 L665.0 293.7 L665.5 294.6 L666.0 298.0 L666.5 303.4 L667.0 302.3 L667.5 298.3 L668.0 300.2 L668.5 303.6 L669.0 304.6 L669.5 306.5 L670.0 309.7 L670.5 309.3 L671.0 310.3 L671.5 311.4 L672.0 313.8 L672.5 314.1 L673.0 315.6 L673.5 316.6 L674.0 318.0 L674.5 315.7 L675.0 314.9 L675.5 317.5 L676.0 316.1 L676.5 318.5 L677.0 317.6 L677.5 315.8 L678.0 319.6 L678.5 318.8 L679.0 319.7 L679.5 321.9 L680.0 320.0 L680.5 323.1 L681.0 323.9 L681.5 322.6 L682.0 321.8 L682.5 323.6 L683.0 324.7 L683.5 322.3 L684.0 321.9 L684.5 320.6 L685.0 321.9 L685.5 323.2 L686.0 321.7 L686.5 318.3 L687.0 321.0 L687.5 322.3 L688.0 323.5 L688.5 324.2 L689.0 323.2 L689.5 325.5 L690.0 323.6 L690.5 326.0 L691.0 324.7 L691.5 325.2 L692.0 328.9 L692.5 327.8 L693.0 326.7 L693.5 326.0 L694.0 328.3 L694.5 326.0 L695.0 324.8 L695.5 326.6 L696.0 325.1 L696.5 324.7 L697.0 326.3 L697.5 326.3 L698.0 325.1 L698.5 324.9 L699.0 327.5 L699.5 326.4 L700.0 320.9 L700.5 325.1 L701.0 325.5 L701.5 318.9 L702.0 317.8 L702.5 323.4 L703.0 326.2 L703.5 321.4 L704.0 323.2 L704.5 324.1 L705.0 325.6 L705.5 329.5 L706.0 327.6 L706.5 323.8 L707.0 327.3 L707.5 325.9 L708.0 327.3 L708.5 327.2 L709.0 325.9 L709.5 324.3 L710.0 324.9 L710.5 327.2 L711.0 327.5 L711.5 326.7 L712.0 326.7 L712.5 326.6 L713.0 325.5 L713.5 326.7 L714.0 325.8 L714.5 326.2 L715.0 325.0 L715.5 326.9 L716.0 327.4 L716.5 326.6 L717.0 328.2 L717.5 326.3 L718.0 327.6 L718.5 329.2 L719.0 329.9 L719.5 327.7 L720.0 325.7 L720.5 325.2 L721.0 325.3 L721.5 326.6 L722.0 326.0 L722.5 329.4 L723.0 330.0 L723.5 330.8 L724.0 329.2 L724.5 325.6 L725.0 325.8 L725.5 325.7 L726.0 326.1 L726.5 325.4 L727.0 325.5 L727.5 323.2 L728.0 324.7 L728.5 326.9 L729.0 330.7 L729.5 335.9 L730.0 335.5 L730.5 329.9 L731.0 329.7 L731.5 327.7 L732.0 328.4 L732.5 327.0 L733.0 327.7 L733.5 327.3 L734.0 326.1 L734.5 329.8 L735.0 327.1 L735.5 327.1 L736.0 327.7 L736.5 324.5 L737.0 325.0 L737.5 326.1 L738.0 328.1 L738.5 326.0 L739.0 324.0 L739.5 325.5 L740.0 329.6 L740.5 331.4 L741.0 329.8 L741.5 328.8 L742.0 329.4 L742.5 328.3 L743.0 324.2 L743.5 329.2 L744.0 327.4 L744.5 327.4 L745.0 329.6 L745.5 328.1 L746.0 328.0 L746.5 324.9 L747.0 327.0 L747.5 326.2 L748.0 324.2 L748.5 328.3 L749.0 328.4 L749.5 329.3 L750.0 330.1 L750.5 326.6 L751.0 328.6 L751.5 329.8 L752.0 326.8 L752.5 326.3 L753.0 331.4 L753.5 330.8 L754.0 327.4 L754.5 328.4 L755.0 329.4 L755.5 328.0 L756.0 331.2 L756.5 330.9 L757.0 331.1 L757.5 329.9 L758.0 327.1 L758.5 327.7 L759.0 332.3 L759.5 332.9 L760.0 328.1 L760.5 328.7 L761.0 329.4 L761.5 328.6 L762.0 328.3 L762.5 327.9 L763.0 327.0 L763.5 328.4 L764.0 328.9 L764.5 328.7 L765.0 327.1 L765.5 328.0 L766.0 328.7 L766.5 328.8 L767.0 328.3 L767.5 329.1 L768.0 325.1 L768.5 321.6 L769.0 325.2 L769.5 327.5 L770.0 325.8 L770.5 328.2 L771.0 328.9 L771.5 328.0 L772.0 331.1 L772.5 329.1 L773.0 329.1 L773.5 329.2 L774.0 328.7 L774.5 330.3 L775.0 327.7 L775.5 324.8 L776.0 326.3 L776.5 327.9 L777.0 329.3 L777.5 329.9 L778.0 329.3 L778.5 326.0 L779.0 326.8 L779.5 328.2 L780.0 330.0 L780.5 328.6 L781.0 328.7 L781.5 330.2 L782.0 331.9 L782.5 329.7 L783.0 330.7 L783.5 330.5 L784.0 326.7 L784.5 327.5 L785.0 329.6 L785.5 326.2 L786.0 322.4 L786.5 326.1 L787.0 327.8 L787.5 326.9 L788.0 327.3 L788.5 323.9 L789.0 325.7 L789.5 330.4 L790.0 329.3 L790.5 328.7 L791.0 327.6 L791.5 328.5 L792.0 327.4 L792.5 328.5 L793.0 327.6 L793.5 327.8 L794.0 326.6 L794.5 327.3 L795.0 329.6 L795.5 329.0 L796.0 328.3 L796.5 325.2 L797.0 323.7 L797.5 326.3 L798.0 325.5 L798.5 327.7 L799.0 326.2 L799.5 325.0 L800.0 327.3 L800.5 328.8 L801.0 327.4 L801.5 327.3 L802.0 328.4 L802.5 327.1 L803.0 327.0 L803.5 332.0 L804.0 331.2 L804.5 330.3 L805.0 328.1 L805.5 327.5 L806.0 329.8 L806.5 330.3 L807.0 326.5 L807.5 325.6 L808.0 326.1 L808.5 324.4 L809.0 324.0 L809.5 326.4 L810.0 328.6 L810.5 329.1 L811.0 328.3 L811.5 324.3 L812.0 322.9 L812.5 322.9 L813.0 321.4 L813.5 323.5 L814.0 324.8 L814.5 324.2 L815.0 326.2 L815.5 324.6 L816.0 323.9 L816.5 325.5 L817.0 328.4 L817.5 327.9 L818.0 331.4 L818.5 329.5 L819.0 327.1 L819.5 327.6 L820.0 331.6 L820.5 330.2 L821.0 328.1 L821.5 326.9 L822.0 326.1 L822.5 325.8 L823.0 327.4 L823.5 328.8 L824.0 328.5 L824.5 328.5 L825.0 330.3 L825.5 325.0 L826.0 326.9 L826.5 327.9 L827.0 328.9 L827.5 329.5 L828.0 329.3 L828.5 326.3 L829.0 325.2 L829.5 327.7 L830.0 329.5 L830.5 327.6" fill="none" stroke="#04046c" stroke-width="2.8" stroke-linejoin="round"/>
<rect x="656" y="167" width="2" height="176" fill="#ff00ff"/>
</g>
<rect x="505.5" y="167.5" width="326" height="175" fill="none" stroke="#000" stroke-width="1"/>
<text x="618" y="381" letter-spacing="-0.45">X Position / mm</text>
<text transform="translate(472 252.5) rotate(-90)" text-anchor="middle" letter-spacing="-0.7">Average Intensity</text>
</svg>
<svg style="left:878px;top:157px" width="397" height="226" viewBox="878 157 397 226" font-family="'DejaVu Sans','Liberation Sans',sans-serif" font-weight="bold" font-size="12" fill="#111">
<rect x="928.5" y="167.5" width="326" height="175" fill="#fff" stroke="none"/>
<path d="M923 342.5 H928" stroke="#000" stroke-width="1"/>
<text x="919" y="347" text-anchor="end" letter-spacing="-0.4">0</text>
<path d="M929 307.5 H1254" stroke="#c4c4c4" stroke-width="1"/>
<path d="M923 307.5 H928" stroke="#000" stroke-width="1"/>
<text x="919" y="312" text-anchor="end" letter-spacing="-0.4">2</text>
<path d="M929 272.5 H1254" stroke="#c4c4c4" stroke-width="1"/>
<path d="M923 272.5 H928" stroke="#000" stroke-width="1"/>
<text x="919" y="277" text-anchor="end" letter-spacing="-0.4">4</text>
<path d="M929 237.5 H1254" stroke="#c4c4c4" stroke-width="1"/>
<path d="M923 237.5 H928" stroke="#000" stroke-width="1"/>
<text x="919" y="242" text-anchor="end" letter-spacing="-0.4">6</text>
<path d="M929 202.5 H1254" stroke="#c4c4c4" stroke-width="1"/>
<path d="M923 202.5 H928" stroke="#000" stroke-width="1"/>
<text x="919" y="207" text-anchor="end" letter-spacing="-0.4">8</text>
<path d="M923 167.5 H928" stroke="#000" stroke-width="1"/>
<text x="919" y="172" text-anchor="end" letter-spacing="-0.4">10</text>
<path d="M937.5 168 V342" stroke="#c4c4c4" stroke-width="1"/>
<path d="M937.5 342 V347.5" stroke="#000" stroke-width="1"/>
<text x="937.5" y="362" text-anchor="middle" letter-spacing="-0.3">-60</text>
<path d="M988.5 168 V342" stroke="#c4c4c4" stroke-width="1"/>
<path d="M988.5 342 V347.5" stroke="#000" stroke-width="1"/>
<text x="988.5" y="362" text-anchor="middle" letter-spacing="-0.3">-40</text>
<path d="M1038.5 168 V342" stroke="#c4c4c4" stroke-width="1"/>
<path d="M1038.5 342 V347.5" stroke="#000" stroke-width="1"/>
<text x="1038.5" y="362" text-anchor="middle" letter-spacing="-0.3">-20</text>
<path d="M1089.5 342 V347.5" stroke="#000" stroke-width="1"/>
<text x="1089.5" y="362" text-anchor="middle" letter-spacing="-0.3">0</text>
<path d="M1139.5 168 V342" stroke="#c4c4c4" stroke-width="1"/>
<path d="M1139.5 342 V347.5" stroke="#000" stroke-width="1"/>
<text x="1139.5" y="362" text-anchor="middle" letter-spacing="-0.3">20</text>
<path d="M1190.5 168 V342" stroke="#c4c4c4" stroke-width="1"/>
<path d="M1190.5 342 V347.5" stroke="#000" stroke-width="1"/>
<text x="1190.5" y="362" text-anchor="middle" letter-spacing="-0.3">40</text>
<path d="M1240.5 168 V342" stroke="#c4c4c4" stroke-width="1"/>
<path d="M1240.5 342 V347.5" stroke="#000" stroke-width="1"/>
<text x="1240.5" y="362" text-anchor="middle" letter-spacing="-0.3">60</text>
<clipPath id="cp12"><rect x="929" y="168" width="325" height="174"/></clipPath>
<g clip-path="url(#cp12)">
<path d="M929.0 326.8 L929.5 325.5 L930.0 327.6 L930.5 329.6 L931.0 330.4 L931.5 322.4 L932.0 323.7 L932.5 327.5 L933.0 321.1 L933.5 327.5 L934.0 327.6 L934.5 324.7 L935.0 319.8 L935.5 324.6 L936.0 333.5 L936.5 329.3 L937.0 323.4 L937.5 324.6 L938.0 323.9 L938.5 327.5 L939.0 326.2 L939.5 332.7 L940.0 330.0 L940.5 331.0 L941.0 326.6 L941.5 324.5 L942.0 323.7 L942.5 324.0 L943.0 322.7 L943.5 323.4 L944.0 325.5 L944.5 326.5 L945.0 321.8 L945.5 320.4 L946.0 317.3 L946.5 320.2 L947.0 323.1 L947.5 321.3 L948.0 325.8 L948.5 330.6 L949.0 321.4 L949.5 318.9 L950.0 320.4 L950.5 320.0 L951.0 322.1 L951.5 325.7 L952.0 327.6 L952.5 323.8 L953.0 327.4 L953.5 331.5 L954.0 332.1 L954.5 325.8 L955.0 325.9 L955.5 330.8 L956.0 328.7 L956.5 330.0 L957.0 332.0 L957.5 326.3 L958.0 327.2 L958.5 327.7 L959.0 323.7 L959.5 324.2 L960.0 327.7 L960.5 325.0 L961.0 323.2 L961.5 325.5 L962.0 322.1 L962.5 323.0 L963.0 321.6 L963.5 324.3 L964.0 324.5 L964.5 323.8 L965.0 322.9 L965.5 320.5 L966.0 321.6 L966.5 324.0 L967.0 326.4 L967.5 328.6 L968.0 330.3 L968.5 326.9 L969.0 323.7 L969.5 321.2 L970.0 319.5 L970.5 322.0 L971.0 320.5 L971.5 321.4 L972.0 323.5 L972.5 329.8 L973.0 326.5 L973.5 323.6 L974.0 321.2 L974.5 320.8 L975.0 320.4 L975.5 320.8 L976.0 328.8 L976.5 333.9 L977.0 326.7 L977.5 321.9 L978.0 330.1 L978.5 327.9 L979.0 324.7 L979.5 322.1 L980.0 322.9 L980.5 325.2 L981.0 326.8 L981.5 327.4 L982.0 322.5 L982.5 320.8 L983.0 327.8 L983.5 328.3 L984.0 328.7 L984.5 323.5 L985.0 323.2 L985.5 326.9 L986.0 322.3 L986.5 322.2 L987.0 325.2 L987.5 323.4 L988.0 325.2 L988.5 325.8 L989.0 326.5 L989.5 325.6 L990.0 322.7 L990.5 323.8 L991.0 324.8 L991.5 324.6 L992.0 324.5 L992.5 324.4 L993.0 324.5 L993.5 322.3 L994.0 325.8 L994.5 331.1 L995.0 324.8 L995.5 327.6 L996.0 330.2 L996.5 338.4 L997.0 333.8 L997.5 329.9 L998.0 327.5 L998.5 324.0 L999.0 315.8 L999.5 314.8 L1000.0 319.3 L1000.5 323.5 L1001.0 326.0 L1001.5 325.4 L1002.0 325.6 L1002.5 323.1 L1003.0 326.4 L1003.5 321.3 L1004.0 322.1 L1004.5 323.9 L1005.0 323.7 L1005.5 325.8 L1006.0 324.3 L1006.5 324.0 L1007.0 322.0 L1007.5 316.2 L1008.0 321.8 L1008.5 326.1 L1009.0 322.7 L1009.5 325.8 L1010.0 329.6 L1010.5 325.1 L1011.0 317.2 L1011.5 319.4 L1012.0 322.7 L1012.5 324.6 L1013.0 327.5 L1013.5 324.1 L1014.0 323.0 L1014.5 326.1 L1015.0 325.1 L1015.5 322.1 L1016.0 318.4 L1016.5 314.0 L1017.0 318.5 L1017.5 323.1 L1018.0 324.0 L1018.5 317.9 L1019.0 315.5 L1019.5 321.3 L1020.0 326.3 L1020.5 326.4 L1021.0 323.4 L1021.5 322.8 L1022.0 318.7 L1022.5 314.0 L1023.0 322.6 L1023.5 323.0 L1024.0 320.5 L1024.5 323.6 L1025.0 320.3 L1025.5 322.2 L1026.0 323.3 L1026.5 321.5 L1027.0 322.3 L1027.5 312.7 L1028.0 308.2 L1028.5 313.6 L1029.0 319.3 L1029.5 316.5 L1030.0 323.5 L1030.5 327.0 L1031.0 323.3 L1031.5 321.6 L1032.0 326.1 L1032.5 321.0 L1033.0 322.0 L1033.5 322.8 L1034.0 322.4 L1034.5 324.1 L1035.0 323.5 L1035.5 322.6 L1036.0 319.0 L1036.5 320.5 L1037.0 322.7 L1037.5 321.9 L1038.0 322.9 L1038.5 322.0 L1039.0 319.4 L1039.5 321.4 L1040.0 320.9 L1040.5 320.7 L1041.0 323.4 L1041.5 319.0 L1042.0 320.8 L1042.5 324.1 L1043.0 322.7 L1043.5 324.0 L1044.0 322.1 L1044.5 320.6 L1045.0 321.3 L1045.5 319.6 L1046.0 318.7 L1046.5 320.9 L1047.0 323.6 L1047.5 321.7 L1048.0 322.3 L1048.5 317.4 L1049.0 316.0 L1049.5 319.5 L1050.0 321.2 L1050.5 319.3 L1051.0 316.0 L1051.5 318.2 L1052.0 312.5 L1052.5 310.3 L1053.0 315.2 L1053.5 310.7 L1054.0 308.4 L1054.5 308.5 L1055.0 309.3 L1055.5 310.8 L1056.0 307.0 L1056.5 307.5 L1057.0 306.3 L1057.5 307.2 L1058.0 307.4 L1058.5 304.0 L1059.0 301.3 L1059.5 302.8 L1060.0 297.3 L1060.5 303.8 L1061.0 299.6 L1061.5 300.8 L1062.0 295.7 L1062.5 289.8 L1063.0 287.6 L1063.5 284.7 L1064.0 286.6 L1064.5 279.3 L1065.0 281.7 L1065.5 279.3 L1066.0 275.0 L1066.5 272.8 L1067.0 270.4 L1067.5 269.2 L1068.0 269.6 L1068.5 263.0 L1069.0 256.1 L1069.5 257.8 L1070.0 254.7 L1070.5 249.3 L1071.0 247.2 L1071.5 245.5 L1072.0 242.3 L1072.5 240.9 L1073.0 242.0 L1073.5 241.1 L1074.0 237.5 L1074.5 229.7 L1075.0 224.2 L1075.5 224.8 L1076.0 223.9 L1076.5 213.3 L1077.0 208.5 L1077.5 205.8 L1078.0 207.0 L1078.5 201.0 L1079.0 199.6 L1079.5 193.1 L1080.0 193.2 L1080.5 189.9 L1081.0 189.5 L1081.5 178.8 L1082.0 175.8 L1082.5 174.5 L1083.0 174.9 L1083.5 170.2 L1084.0 172.3 L1084.5 174.1 L1085.0 171.5 L1085.5 174.0 L1086.0 172.5 L1086.5 168.5 L1087.0 168.8 L1087.5 168.5 L1088.0 168.5 L1088.5 168.5 L1089.0 177.1 L1089.5 177.2 L1090.0 178.0 L1090.5 176.9 L1091.0 177.5 L1091.5 183.7 L1092.0 190.4 L1092.5 192.5 L1093.0 195.7 L1093.5 198.7 L1094.0 198.6 L1094.5 203.1 L1095.0 211.3 L1095.5 208.0 L1096.0 210.2 L1096.5 218.9 L1097.0 224.2 L1097.5 224.4 L1098.0 232.0 L1098.5 232.0 L1099.0 237.3 L1099.5 236.0 L1100.0 241.6 L1100.5 240.6 L1101.0 251.8 L1101.5 261.2 L1102.0 259.5 L1102.5 259.4 L1103.0 259.0 L1103.5 266.4 L1104.0 261.6 L1104.5 264.6 L1105.0 268.5 L1105.5 269.2 L1106.0 271.8 L1106.5 275.0 L1107.0 282.4 L1107.5 288.5 L1108.0 288.5 L1108.5 287.1 L1109.0 289.7 L1109.5 297.0 L1110.0 294.2 L1110.5 293.5 L1111.0 290.4 L1111.5 296.6 L1112.0 299.9 L1112.5 296.9 L1113.0 299.2 L1113.5 302.9 L1114.0 300.8 L1114.5 292.2 L1115.0 298.6 L1115.5 313.6 L1116.0 312.0 L1116.5 309.1 L1117.0 313.0 L1117.5 310.8 L1118.0 313.7 L1118.5 315.2 L1119.0 314.5 L1119.5 316.7 L1120.0 315.9 L1120.5 316.8 L1121.0 315.4 L1121.5 315.4 L1122.0 310.9 L1122.5 310.5 L1123.0 313.6 L1123.5 317.4 L1124.0 316.4 L1124.5 314.6 L1125.0 310.6 L1125.5 313.4 L1126.0 319.9 L1126.5 317.1 L1127.0 316.0 L1127.5 316.6 L1128.0 314.7 L1128.5 319.4 L1129.0 316.3 L1129.5 313.8 L1130.0 314.2 L1130.5 317.1 L1131.0 318.5 L1131.5 313.7 L1132.0 319.7 L1132.5 318.1 L1133.0 317.4 L1133.5 321.6 L1134.0 320.7 L1134.5 322.3 L1135.0 322.9 L1135.5 319.6 L1136.0 312.3 L1136.5 311.8 L1137.0 315.4 L1137.5 318.8 L1138.0 317.8 L1138.5 320.3 L1139.0 322.9 L1139.5 321.2 L1140.0 313.2 L1140.5 313.7 L1141.0 317.5 L1141.5 316.1 L1142.0 316.4 L1142.5 320.0 L1143.0 321.6 L1143.5 321.2 L1144.0 322.7 L1144.5 321.4 L1145.0 314.3 L1145.5 314.4 L1146.0 314.4 L1146.5 317.1 L1147.0 315.4 L1147.5 320.4 L1148.0 322.1 L1148.5 322.0 L1149.0 317.2 L1149.5 314.0 L1150.0 315.9 L1150.5 316.3 L1151.0 318.3 L1151.5 316.5 L1152.0 317.2 L1152.5 312.5 L1153.0 311.8 L1153.5 314.6 L1154.0 318.2 L1154.5 317.4 L1155.0 319.6 L1155.5 318.9 L1156.0 316.4 L1156.5 317.6 L1157.0 322.7 L1157.5 321.5 L1158.0 318.4 L1158.5 318.2 L1159.0 321.4 L1159.5 320.7 L1160.0 318.7 L1160.5 320.3 L1161.0 323.6 L1161.5 319.9 L1162.0 315.9 L1162.5 319.4 L1163.0 322.7 L1163.5 320.1 L1164.0 319.3 L1164.5 322.7 L1165.0 322.6 L1165.5 323.2 L1166.0 317.6 L1166.5 320.6 L1167.0 322.5 L1167.5 320.1 L1168.0 324.6 L1168.5 324.8 L1169.0 326.4 L1169.5 319.6 L1170.0 321.2 L1170.5 325.3 L1171.0 329.7 L1171.5 325.0 L1172.0 319.7 L1172.5 320.6 L1173.0 317.7 L1173.5 316.7 L1174.0 320.8 L1174.5 324.5 L1175.0 322.2 L1175.5 323.3 L1176.0 320.9 L1176.5 319.6 L1177.0 319.8 L1177.5 323.1 L1178.0 325.7 L1178.5 319.7 L1179.0 318.4 L1179.5 318.7 L1180.0 320.4 L1180.5 319.1 L1181.0 316.7 L1181.5 318.8 L1182.0 321.8 L1182.5 320.3 L1183.0 320.4 L1183.5 318.1 L1184.0 317.3 L1184.5 320.8 L1185.0 319.0 L1185.5 320.6 L1186.0 318.9 L1186.5 318.6 L1187.0 322.6 L1187.5 321.5 L1188.0 319.2 L1188.5 317.8 L1189.0 319.9 L1189.5 321.1 L1190.0 317.6 L1190.5 321.1 L1191.0 318.4 L1191.5 318.2 L1192.0 320.0 L1192.5 320.6 L1193.0 319.5 L1193.5 319.3 L1194.0 317.0 L1194.5 316.0 L1195.0 315.9 L1195.5 318.6 L1196.0 319.8 L1196.5 318.5 L1197.0 322.4 L1197.5 318.0 L1198.0 319.1 L1198.5 313.6 L1199.0 305.9 L1199.5 310.7 L1200.0 308.6 L1200.5 308.1 L1201.0 313.1 L1201.5 317.3 L1202.0 317.9 L1202.5 320.5 L1203.0 319.4 L1203.5 318.1 L1204.0 320.4 L1204.5 322.8 L1205.0 321.4 L1205.5 313.3 L1206.0 316.3 L1206.5 319.8 L1207.0 319.9 L1207.5 321.9 L1208.0 320.8 L1208.5 313.1 L1209.0 317.6 L1209.5 318.0 L1210.0 316.1 L1210.5 313.4 L1211.0 317.2 L1211.5 318.7 L1212.0 320.2 L1212.5 320.8 L1213.0 319.3 L1213.5 315.7 L1214.0 314.3 L1214.5 316.6 L1215.0 316.3 L1215.5 319.5 L1216.0 323.4 L1216.5 322.2 L1217.0 316.8 L1217.5 311.0 L1218.0 311.3 L1218.5 313.4 L1219.0 314.5 L1219.5 308.9 L1220.0 315.2 L1220.5 316.4 L1221.0 317.2 L1221.5 320.3 L1222.0 322.8 L1222.5 320.1 L1223.0 319.6 L1223.5 318.6 L1224.0 316.8 L1224.5 316.6 L1225.0 317.7 L1225.5 317.5 L1226.0 318.7 L1226.5 318.2 L1227.0 317.0 L1227.5 319.2 L1228.0 318.3 L1228.5 316.5 L1229.0 320.9 L1229.5 324.6 L1230.0 324.8 L1230.5 317.0 L1231.0 316.1 L1231.5 315.5 L1232.0 318.4 L1232.5 322.1 L1233.0 321.6 L1233.5 319.4 L1234.0 312.5 L1234.5 309.4 L1235.0 310.1 L1235.5 315.3 L1236.0 318.5 L1236.5 320.9 L1237.0 316.5 L1237.5 316.4 L1238.0 319.5 L1238.5 320.5 L1239.0 316.5 L1239.5 314.3 L1240.0 309.1 L1240.5 317.1 L1241.0 325.0 L1241.5 320.8 L1242.0 317.1 L1242.5 316.8 L1243.0 322.3 L1243.5 319.7 L1244.0 316.4 L1244.5 315.0 L1245.0 316.1 L1245.5 317.1 L1246.0 317.8 L1246.5 318.3 L1247.0 322.0 L1247.5 319.6 L1248.0 322.0 L1248.5 316.5 L1249.0 315.5 L1249.5 315.7 L1250.0 317.3 L1250.5 316.6 L1251.0 315.8 L1251.5 318.1 L1252.0 320.1 L1252.5 317.3 L1253.0 316.0 L1253.5 314.7" fill="none" stroke="#34349c" stroke-width="1.6" stroke-linejoin="round"/>
<path d="M929.0 326.3 L929.5 325.4 L930.0 326.8 L930.5 328.1 L931.0 328.6 L931.5 323.4 L932.0 324.3 L932.5 326.7 L933.0 322.6 L933.5 326.7 L934.0 326.8 L934.5 325.0 L935.0 321.8 L935.5 324.9 L936.0 330.6 L936.5 327.9 L937.0 324.1 L937.5 324.9 L938.0 324.4 L938.5 326.7 L939.0 325.9 L939.5 330.1 L940.0 328.4 L940.5 329.0 L941.0 326.1 L941.5 324.7 L942.0 324.2 L942.5 324.4 L943.0 323.6 L943.5 324.0 L944.0 325.4 L944.5 326.0 L945.0 323.0 L945.5 322.1 L946.0 320.1 L946.5 321.9 L947.0 323.8 L947.5 322.6 L948.0 325.5 L948.5 328.6 L949.0 322.7 L949.5 321.0 L950.0 322.0 L950.5 321.8 L951.0 323.1 L951.5 325.4 L952.0 326.6 L952.5 324.2 L953.0 326.5 L953.5 329.1 L954.0 329.5 L954.5 325.5 L955.0 325.5 L955.5 328.7 L956.0 327.3 L956.5 328.2 L957.0 329.4 L957.5 325.7 L958.0 326.3 L958.5 326.6 L959.0 324.1 L959.5 324.4 L960.0 326.6 L960.5 324.8 L961.0 323.7 L961.5 325.2 L962.0 323.0 L962.5 323.5 L963.0 322.6 L963.5 324.4 L964.0 324.5 L964.5 324.1 L965.0 323.5 L965.5 321.9 L966.0 322.7 L966.5 324.2 L967.0 325.7 L967.5 327.2 L968.0 328.3 L968.5 326.0 L969.0 324.0 L969.5 322.4 L970.0 321.3 L970.5 322.9 L971.0 321.9 L971.5 322.5 L972.0 323.8 L972.5 327.9 L973.0 325.8 L973.5 323.9 L974.0 322.4 L974.5 322.1 L975.0 321.9 L975.5 322.1 L976.0 327.3 L976.5 330.6 L977.0 325.9 L977.5 322.8 L978.0 328.1 L978.5 326.7 L979.0 324.7 L979.5 322.9 L980.0 323.5 L980.5 325.0 L981.0 326.0 L981.5 326.4 L982.0 323.2 L982.5 322.1 L983.0 326.7 L983.5 326.9 L984.0 327.2 L984.5 323.8 L985.0 323.7 L985.5 326.0 L986.0 323.1 L986.5 323.0 L987.0 324.9 L987.5 323.8 L988.0 325.0 L988.5 325.3 L989.0 325.8 L989.5 325.2 L990.0 323.3 L990.5 324.0 L991.0 324.7 L991.5 324.5 L992.0 324.4 L992.5 324.4 L993.0 324.4 L993.5 323.0 L994.0 325.3 L994.5 328.7 L995.0 324.6 L995.5 326.4 L996.0 328.1 L996.5 333.4 L997.0 330.4 L997.5 327.9 L998.0 326.3 L998.5 324.1 L999.0 318.8 L999.5 318.1 L1000.0 321.0 L1000.5 323.7 L1001.0 325.3 L1001.5 324.9 L1002.0 325.1 L1002.5 323.5 L1003.0 325.5 L1003.5 322.2 L1004.0 322.8 L1004.5 323.9 L1005.0 323.8 L1005.5 325.1 L1006.0 324.2 L1006.5 323.9 L1007.0 322.6 L1007.5 318.9 L1008.0 322.5 L1008.5 325.3 L1009.0 323.1 L1009.5 325.1 L1010.0 327.5 L1010.5 324.6 L1011.0 319.5 L1011.5 320.9 L1012.0 323.0 L1012.5 324.3 L1013.0 326.1 L1013.5 323.9 L1014.0 323.2 L1014.5 325.2 L1015.0 324.6 L1015.5 322.6 L1016.0 320.2 L1016.5 317.3 L1017.0 320.2 L1017.5 323.2 L1018.0 323.8 L1018.5 319.9 L1019.0 318.2 L1019.5 322.0 L1020.0 325.2 L1020.5 325.3 L1021.0 323.3 L1021.5 322.9 L1022.0 320.3 L1022.5 317.2 L1023.0 322.8 L1023.5 323.0 L1024.0 321.4 L1024.5 323.4 L1025.0 321.3 L1025.5 322.4 L1026.0 323.1 L1026.5 322.0 L1027.0 322.5 L1027.5 316.3 L1028.0 313.4 L1028.5 316.9 L1029.0 320.5 L1029.5 318.7 L1030.0 323.2 L1030.5 325.4 L1031.0 323.0 L1031.5 322.0 L1032.0 324.8 L1032.5 321.5 L1033.0 322.2 L1033.5 322.6 L1034.0 322.4 L1034.5 323.5 L1035.0 323.1 L1035.5 322.5 L1036.0 320.1 L1036.5 321.0 L1037.0 322.5 L1037.5 321.9 L1038.0 322.5 L1038.5 321.9 L1039.0 320.2 L1039.5 321.4 L1040.0 321.0 L1040.5 320.9 L1041.0 322.6 L1041.5 319.7 L1042.0 320.8 L1042.5 322.8 L1043.0 321.9 L1043.5 322.7 L1044.0 321.3 L1044.5 320.4 L1045.0 320.7 L1045.5 319.5 L1046.0 318.8 L1046.5 320.2 L1047.0 321.8 L1047.5 320.4 L1048.0 320.7 L1048.5 317.4 L1049.0 316.3 L1049.5 318.4 L1050.0 319.3 L1050.5 317.9 L1051.0 315.6 L1051.5 316.8 L1052.0 312.9 L1052.5 311.2 L1053.0 314.1 L1053.5 311.0 L1054.0 309.2 L1054.5 309.0 L1055.0 309.3 L1055.5 309.9 L1056.0 307.1 L1056.5 307.1 L1057.0 306.0 L1057.5 306.2 L1058.0 305.9 L1058.5 303.3 L1059.0 301.2 L1059.5 301.7 L1060.0 297.6 L1060.5 301.4 L1061.0 298.1 L1061.5 298.4 L1062.0 294.5 L1062.5 290.1 L1063.0 288.1 L1063.5 285.5 L1064.0 286.1 L1064.5 280.6 L1065.0 281.4 L1065.5 279.1 L1066.0 275.4 L1066.5 273.2 L1067.0 270.8 L1067.5 269.2 L1068.0 268.5 L1068.5 263.3 L1069.0 258.0 L1069.5 258.0 L1070.0 255.1 L1070.5 250.6 L1071.0 248.2 L1071.5 246.1 L1072.0 243.0 L1072.5 241.0 L1073.0 240.6 L1073.5 238.9 L1074.0 235.4 L1074.5 229.2 L1075.0 224.5 L1075.5 223.6 L1076.0 221.8 L1076.5 213.8 L1077.0 209.4 L1077.5 206.5 L1078.0 206.1 L1078.5 201.0 L1079.0 199.0 L1079.5 193.7 L1080.0 192.7 L1080.5 189.6 L1081.0 188.4 L1081.5 180.6 L1082.0 177.7 L1082.5 176.1 L1083.0 175.6 L1083.5 172.0 L1084.0 172.8 L1084.5 173.4 L1085.0 171.4 L1085.5 172.8 L1086.0 171.7 L1086.5 169.1 L1087.0 169.4 L1087.5 168.5 L1088.0 168.5 L1088.5 169.7 L1089.0 176.3 L1089.5 177.0 L1090.0 178.2 L1090.5 178.3 L1091.0 179.5 L1091.5 184.4 L1092.0 189.7 L1092.5 192.1 L1093.0 195.1 L1093.5 198.2 L1094.0 199.2 L1094.5 203.2 L1095.0 209.7 L1095.5 208.8 L1096.0 211.4 L1096.5 218.2 L1097.0 222.8 L1097.5 224.2 L1098.0 230.3 L1098.5 231.6 L1099.0 236.2 L1099.5 236.6 L1100.0 241.4 L1100.5 241.9 L1101.0 250.4 L1101.5 257.6 L1102.0 257.7 L1102.5 258.7 L1103.0 259.6 L1103.5 265.4 L1104.0 263.4 L1104.5 266.3 L1105.0 269.8 L1105.5 271.3 L1106.0 273.9 L1106.5 276.9 L1107.0 282.5 L1107.5 287.3 L1108.0 288.1 L1108.5 287.9 L1109.0 290.3 L1109.5 295.7 L1110.0 294.5 L1110.5 294.7 L1111.0 293.3 L1111.5 297.8 L1112.0 300.4 L1112.5 298.9 L1113.0 300.8 L1113.5 303.6 L1114.0 302.6 L1114.5 297.4 L1115.0 301.8 L1115.5 311.8 L1116.0 311.0 L1116.5 309.4 L1117.0 312.2 L1117.5 311.0 L1118.0 313.1 L1118.5 314.2 L1119.0 313.9 L1119.5 315.5 L1120.0 315.2 L1120.5 315.9 L1121.0 315.1 L1121.5 315.2 L1122.0 312.5 L1122.5 312.3 L1123.0 314.4 L1123.5 316.9 L1124.0 316.4 L1124.5 315.3 L1125.0 312.8 L1125.5 314.7 L1126.0 318.9 L1126.5 317.2 L1127.0 316.5 L1127.5 316.9 L1128.0 315.8 L1128.5 318.9 L1129.0 316.9 L1129.5 315.4 L1130.0 315.6 L1130.5 317.5 L1131.0 318.5 L1131.5 315.4 L1132.0 319.3 L1132.5 318.2 L1133.0 317.8 L1133.5 320.6 L1134.0 320.0 L1134.5 321.0 L1135.0 321.4 L1135.5 319.4 L1136.0 314.7 L1136.5 314.4 L1137.0 316.7 L1137.5 318.9 L1138.0 318.2 L1138.5 319.9 L1139.0 321.6 L1139.5 320.5 L1140.0 315.3 L1140.5 315.6 L1141.0 318.1 L1141.5 317.2 L1142.0 317.4 L1142.5 319.7 L1143.0 320.7 L1143.5 320.5 L1144.0 321.5 L1144.5 320.6 L1145.0 316.1 L1145.5 316.1 L1146.0 316.1 L1146.5 317.8 L1147.0 316.7 L1147.5 320.0 L1148.0 321.1 L1148.5 321.0 L1149.0 317.9 L1149.5 315.9 L1150.0 317.1 L1150.5 317.3 L1151.0 318.6 L1151.5 317.5 L1152.0 317.9 L1152.5 314.9 L1153.0 314.4 L1153.5 316.2 L1154.0 318.6 L1154.5 318.1 L1155.0 319.5 L1155.5 319.1 L1156.0 317.4 L1156.5 318.2 L1157.0 321.5 L1157.5 320.7 L1158.0 318.7 L1158.5 318.6 L1159.0 320.6 L1159.5 320.2 L1160.0 318.9 L1160.5 319.9 L1161.0 322.1 L1161.5 319.7 L1162.0 317.1 L1162.5 319.4 L1163.0 321.5 L1163.5 319.8 L1164.0 319.3 L1164.5 321.5 L1165.0 321.4 L1165.5 321.8 L1166.0 318.2 L1166.5 320.1 L1167.0 321.3 L1167.5 319.8 L1168.0 322.7 L1168.5 322.8 L1169.0 323.9 L1169.5 319.5 L1170.0 320.5 L1170.5 323.1 L1171.0 326.0 L1171.5 322.9 L1172.0 319.5 L1172.5 320.1 L1173.0 318.3 L1173.5 317.6 L1174.0 320.2 L1174.5 322.7 L1175.0 321.2 L1175.5 321.9 L1176.0 320.3 L1176.5 319.5 L1177.0 319.6 L1177.5 321.7 L1178.0 323.4 L1178.5 319.6 L1179.0 318.7 L1179.5 318.9 L1180.0 320.0 L1180.5 319.1 L1181.0 317.6 L1181.5 318.9 L1182.0 320.9 L1182.5 319.9 L1183.0 320.0 L1183.5 318.5 L1184.0 318.0 L1184.5 320.3 L1185.0 319.1 L1185.5 320.1 L1186.0 319.0 L1186.5 318.8 L1187.0 321.4 L1187.5 320.7 L1188.0 319.2 L1188.5 318.3 L1189.0 319.7 L1189.5 320.4 L1190.0 318.2 L1190.5 320.4 L1191.0 318.7 L1191.5 318.6 L1192.0 319.7 L1192.5 320.1 L1193.0 319.4 L1193.5 319.2 L1194.0 317.7 L1194.5 317.1 L1195.0 317.0 L1195.5 318.8 L1196.0 319.5 L1196.5 318.7 L1197.0 321.2 L1197.5 318.4 L1198.0 319.0 L1198.5 315.5 L1199.0 310.5 L1199.5 313.6 L1200.0 312.2 L1200.5 312.0 L1201.0 315.2 L1201.5 317.9 L1202.0 318.2 L1202.5 319.9 L1203.0 319.2 L1203.5 318.3 L1204.0 319.8 L1204.5 321.4 L1205.0 320.5 L1205.5 315.3 L1206.0 317.2 L1206.5 319.4 L1207.0 319.4 L1207.5 320.7 L1208.0 320.0 L1208.5 315.1 L1209.0 317.9 L1209.5 318.2 L1210.0 317.0 L1210.5 315.2 L1211.0 317.7 L1211.5 318.6 L1212.0 319.6 L1212.5 320.0 L1213.0 319.0 L1213.5 316.7 L1214.0 315.8 L1214.5 317.2 L1215.0 317.0 L1215.5 319.1 L1216.0 321.6 L1216.5 320.8 L1217.0 317.3 L1217.5 313.6 L1218.0 313.8 L1218.5 315.1 L1219.0 315.8 L1219.5 312.2 L1220.0 316.3 L1220.5 317.1 L1221.0 317.6 L1221.5 319.5 L1222.0 321.1 L1222.5 319.4 L1223.0 319.1 L1223.5 318.4 L1224.0 317.2 L1224.5 317.1 L1225.0 317.8 L1225.5 317.7 L1226.0 318.5 L1226.5 318.1 L1227.0 317.4 L1227.5 318.8 L1228.0 318.2 L1228.5 317.0 L1229.0 319.8 L1229.5 322.2 L1230.0 322.3 L1230.5 317.3 L1231.0 316.7 L1231.5 316.3 L1232.0 318.2 L1232.5 320.6 L1233.0 320.3 L1233.5 318.8 L1234.0 314.4 L1234.5 312.3 L1235.0 312.8 L1235.5 316.1 L1236.0 318.2 L1236.5 319.8 L1237.0 316.9 L1237.5 316.9 L1238.0 318.8 L1238.5 319.5 L1239.0 316.9 L1239.5 315.5 L1240.0 312.1 L1240.5 317.3 L1241.0 322.4 L1241.5 319.6 L1242.0 317.2 L1242.5 317.0 L1243.0 320.6 L1243.5 318.9 L1244.0 316.8 L1244.5 315.9 L1245.0 316.6 L1245.5 317.3 L1246.0 317.7 L1246.5 318.0 L1247.0 320.4 L1247.5 318.9 L1248.0 320.4 L1248.5 316.8 L1249.0 316.2 L1249.5 316.3 L1250.0 317.4 L1250.5 316.9 L1251.0 316.4 L1251.5 317.9 L1252.0 319.2 L1252.5 317.4 L1253.0 316.5 L1253.5 315.7" fill="none" stroke="#04046c" stroke-width="2.8" stroke-linejoin="round"/>
<rect x="1088" y="167" width="2" height="176" fill="#ff00ff"/>
</g>
<rect x="928.5" y="167.5" width="326" height="175" fill="none" stroke="#000" stroke-width="1"/>
<text x="1042" y="381" letter-spacing="-0.45">Y Position / mm</text>
<text transform="translate(895 252.5) rotate(-90)" text-anchor="middle" letter-spacing="-0.7">Average Intensity</text>
</svg>
<div class="g" style="left:305px;top:402px;width:502px;height:118px;border:1px solid #c4c4c4;"></div>
<div style="left:310px;top:402px;width:49px;height:1px;background:#eee;"></div>
<div class="t" style="left:311.5px;top:396px;font-size:12px;letter-spacing:-0.498px;">Display</div>
<div class="t" style="left:310.5px;top:419px;font-size:12px;letter-spacing:-1.004px;">Mode:</div>
<div style="left:384px;top:414px;width:418px;height:22px;border:1px solid #8a8a8a;background:#eee;"></div>
<div class="cbtn" style="left:785px;top:415px;width:18px;height:22px;"></div>
<div style="left:784px;top:415px;width:1px;height:22px;background:#8a8a8a;"></div>
<svg style="position:absolute;left:790px;top:424px" width="10" height="5"><polygon points="0,0 10,0 5.0,5" fill="#222"/></svg>
<div class="t" style="left:387.0px;top:419px;font-size:12px;letter-spacing:-0.828px;">Linear</div>
<div class="t" style="left:310.5px;top:443px;font-size:12px;letter-spacing:-0.747px;">Brightness:</div>
<div style="left:391px;top:447px;width:404px;height:4px;border:1px solid #6f8fb8;background:linear-gradient(to bottom,#cccccc,#ffffff 60%,#ececec);box-shadow:0 0 0 1px #e6f2fa;"></div>
<div style="left:391px;top:462px;width:1px;height:6px;background:#b0b0b0;"></div>
<div style="left:594px;top:462px;width:1px;height:6px;background:#b0b0b0;"></div>
<div style="left:796px;top:462px;width:1px;height:6px;background:#b0b0b0;"></div>
<div class="t" style="left:384px;top:470px;font-size:12px;font-weight:normal;-webkit-text-stroke:0.3px;letter-spacing:0px;">1x</div>
<div class="t" style="left:588px;top:470px;font-size:12px;font-weight:normal;-webkit-text-stroke:0.3px;letter-spacing:0px;">2x</div>
<div class="t" style="left:789px;top:470px;font-size:12px;font-weight:normal;-webkit-text-stroke:0.3px;letter-spacing:0px;">4x</div>
<svg style="left:788px;top:441px" width="17" height="18" viewBox="0 0 17 18"><defs><linearGradient id="tg" x1="0" y1="0" x2="0" y2="1"><stop offset="0" stop-color="#fff"/><stop offset="1" stop-color="#c4d4ea"/></linearGradient></defs><path d="M1.500 1.500 H15.500 V9.500 L8.500 16.500 L1.500 9.500 Z" fill="url(#tg)" stroke="#3a3a3a" stroke-width="1"/></svg>
<div class="cb" style="left:316px;top:496px;width:11px;height:11px;"></div>
<svg style="position:absolute;left:316px;top:496px" width="13" height="13" viewBox="0 0 13 13"><path d="M3 6 L3 9.5 L5 9.5 L10 3.5 L10 2.5 L9 3 L5 7.5 L4.6 6 Z" fill="#222" stroke="#222" stroke-width="0.6"/></svg>
<div class="t" style="left:331.5px;top:496px;font-size:12px;letter-spacing:-0.464px;">Show Grid</div>
<div class="cb" style="left:421px;top:496px;width:11px;height:11px;"></div>
<svg style="position:absolute;left:421px;top:496px" width="13" height="13" viewBox="0 0 13 13"><path d="M3 6 L3 9.5 L5 9.5 L10 3.5 L10 2.5 L9 3 L5 7.5 L4.6 6 Z" fill="#222" stroke="#222" stroke-width="0.6"/></svg>
<div class="t" style="left:436.5px;top:496px;font-size:12px;letter-spacing:-0.534px;">Show Marker</div>
<div class="btn" style="left:527px;top:490px;width:73px;height:23px;"></div>
<div class="t" style="left:527px;top:496px;font-size:12px;letter-spacing:-0.714px;width:75px;text-align:center;">Center</div>
<div class="g" style="left:305px;top:531px;width:502px;height:150px;border:1px solid #c4c4c4;"></div>
<div style="left:310px;top:531px;width:28px;height:1px;background:#eee;"></div>
<div class="t" style="left:311.5px;top:525px;font-size:12px;letter-spacing:-0.371px;">Info</div>
<div class="t" style="left:310.5px;top:544px;font-size:12px;letter-spacing:-0.848px;">Cyclename:</div>
<div class="t" style="left:383.5px;top:544px;font-size:12px;letter-spacing:-0.781px;">SIS.USER.VACC_12</div>
<div class="t" style="left:310.5px;top:563px;font-size:12px;letter-spacing:-0.714px;">Acq Time:</div>
<div class="t" style="left:384.5px;top:563px;font-size:12px;letter-spacing:-0.259px;">2014-07-28 11:41:13.364</div>
<div style="left:310px;top:581px;width:494px;height:1px;background:#6d93c4;"></div>
<div class="t" style="left:310.5px;top:588px;font-size:12px;letter-spacing:-0.823px;">Integral:</div>
<div class="t" style="left:383.5px;top:588px;font-size:12px;letter-spacing:-0.279px;">1190543</div>
<div class="t" style="left:310.5px;top:607px;font-size:12px;letter-spacing:-0.857px;">Center X:</div>
<div class="t" style="left:391.5px;top:607px;font-size:12px;letter-spacing:-0.062px;">-7.5 mm</div>
<div class="t" style="left:310.5px;top:626px;font-size:12px;letter-spacing:-1.237px;">FWHM X:</div>
<div class="t" style="left:391.5px;top:626px;font-size:12px;letter-spacing:-0.542px;">18.6 mm</div>
<div class="t" style="left:310.5px;top:645px;font-size:12px;letter-spacing:-0.678px;">Center Y:</div>
<div class="t" style="left:395.5px;top:645px;font-size:12px;letter-spacing:-0.626px;">1.9 mm</div>
<div class="t" style="left:310.5px;top:664px;font-size:12px;letter-spacing:-1.007px;">FWHM Y:</div>
<div class="t" style="left:391.5px;top:664px;font-size:12px;letter-spacing:-0.542px;">11.1 mm</div>
<div class="g" style="left:305px;top:692px;width:502px;height:298px;border:1px solid #c4c4c4;"></div>
<div style="left:310px;top:692px;width:67px;height:1px;background:#eee;"></div>
<div class="t" style="left:311.5px;top:686px;font-size:12px;letter-spacing:-0.71px;">Histogram</div>
<svg style="left:308px;top:701px" width="495" height="290" viewBox="308 701 495 290" font-family="'DejaVu Sans','Liberation Sans',sans-serif" font-weight="bold" font-size="12" fill="#111">
<rect x="398.5" y="711.5" width="394" height="234" fill="#fff"/>
<path d="M399 911.5 H792" stroke="#c4c4c4" stroke-width="1"/>
<path d="M393 911.5 H398" stroke="#000" stroke-width="1"/>
<text x="389" y="916.5" text-anchor="end" letter-spacing="-0.35">1</text>
<path d="M399 877.5 H792" stroke="#c4c4c4" stroke-width="1"/>
<path d="M393 877.5 H398" stroke="#000" stroke-width="1"/>
<text x="389" y="882.5" text-anchor="end" letter-spacing="-0.35">10</text>
<path d="M399 844.5 H792" stroke="#c4c4c4" stroke-width="1"/>
<path d="M393 844.5 H398" stroke="#000" stroke-width="1"/>
<text x="389" y="849.5" text-anchor="end" letter-spacing="-0.35">100</text>
<path d="M399 811.5 H792" stroke="#c4c4c4" stroke-width="1"/>
<path d="M393 811.5 H398" stroke="#000" stroke-width="1"/>
<text x="389" y="816.5" text-anchor="end" letter-spacing="-0.35">1000</text>
<path d="M399 777.5 H792" stroke="#c4c4c4" stroke-width="1"/>
<path d="M393 777.5 H398" stroke="#000" stroke-width="1"/>
<text x="389" y="782.5" text-anchor="end" letter-spacing="-0.35">10000</text>
<path d="M399 744.5 H792" stroke="#c4c4c4" stroke-width="1"/>
<path d="M393 744.5 H398" stroke="#000" stroke-width="1"/>
<text x="389" y="749.5" text-anchor="end" letter-spacing="-0.35">100000</text>
<path d="M393 711.5 H398" stroke="#000" stroke-width="1"/>
<text x="389" y="716.5" text-anchor="end" letter-spacing="-0.35">1000000</text>
<path d="M395 934.5 H398" stroke="#000" stroke-width="1"/>
<path d="M395 928.5 H398" stroke="#000" stroke-width="1"/>
<path d="M395 924.5 H398" stroke="#000" stroke-width="1"/>
<path d="M395 921.5 H398" stroke="#000" stroke-width="1"/>
<path d="M395 918.5 H398" stroke="#000" stroke-width="1"/>
<path d="M395 916.5 H398" stroke="#000" stroke-width="1"/>
<path d="M395 914.5 H398" stroke="#000" stroke-width="1"/>
<path d="M395 912.5 H398" stroke="#000" stroke-width="1"/>
<path d="M395 901.5 H398" stroke="#000" stroke-width="1"/>
<path d="M395 895.5 H398" stroke="#000" stroke-width="1"/>
<path d="M395 891.5 H398" stroke="#000" stroke-width="1"/>
<path d="M395 887.5 H398" stroke="#000" stroke-width="1"/>
<path d="M395 885.5 H398" stroke="#000" stroke-width="1"/>
<path d="M395 883.5 H398" stroke="#000" stroke-width="1"/>
<path d="M395 881.5 H398" stroke="#000" stroke-width="1"/>
<path d="M395 879.5 H398" stroke="#000" stroke-width="1"/>
<path d="M395 867.5 H398" stroke="#000" stroke-width="1"/>
<path d="M395 862.5 H398" stroke="#000" stroke-width="1"/>
<path d="M395 857.5 H398" stroke="#000" stroke-width="1"/>
<path d="M395 854.5 H398" stroke="#000" stroke-width="1"/>
<path d="M395 851.5 H398" stroke="#000" stroke-width="1"/>
<path d="M395 849.5 H398" stroke="#000" stroke-width="1"/>
<path d="M395 847.5 H398" stroke="#000" stroke-width="1"/>
<path d="M395 846.5 H398" stroke="#000" stroke-width="1"/>
<path d="M395 834.5 H398" stroke="#000" stroke-width="1"/>
<path d="M395 828.5 H398" stroke="#000" stroke-width="1"/>
<path d="M395 824.5 H398" stroke="#000" stroke-width="1"/>
<path d="M395 821.5 H398" stroke="#000" stroke-width="1"/>
<path d="M395 818.5 H398" stroke="#000" stroke-width="1"/>
<path d="M395 816.5 H398" stroke="#000" stroke-width="1"/>
<path d="M395 814.5 H398" stroke="#000" stroke-width="1"/>
<path d="M395 812.5 H398" stroke="#000" stroke-width="1"/>
<path d="M395 801.5 H398" stroke="#000" stroke-width="1"/>
<path d="M395 795.5 H398" stroke="#000" stroke-width="1"/>
<path d="M395 791.5 H398" stroke="#000" stroke-width="1"/>
<path d="M395 787.5 H398" stroke="#000" stroke-width="1"/>
<path d="M395 785.5 H398" stroke="#000" stroke-width="1"/>
<path d="M395 782.5 H398" stroke="#000" stroke-width="1"/>
<path d="M395 781.5 H398" stroke="#000" stroke-width="1"/>
<path d="M395 779.5 H398" stroke="#000" stroke-width="1"/>
<path d="M395 767.5 H398" stroke="#000" stroke-width="1"/>
<path d="M395 761.5 H398" stroke="#000" stroke-width="1"/>
<path d="M395 757.5 H398" stroke="#000" stroke-width="1"/>
<path d="M395 754.5 H398" stroke="#000" stroke-width="1"/>
<path d="M395 751.5 H398" stroke="#000" stroke-width="1"/>
<path d="M395 749.5 H398" stroke="#000" stroke-width="1"/>
<path d="M395 747.5 H398" stroke="#000" stroke-width="1"/>
<path d="M395 745.5 H398" stroke="#000" stroke-width="1"/>
<path d="M395 734.5 H398" stroke="#000" stroke-width="1"/>
<path d="M395 728.5 H398" stroke="#000" stroke-width="1"/>
<path d="M395 724.5 H398" stroke="#000" stroke-width="1"/>
<path d="M395 721.5 H398" stroke="#000" stroke-width="1"/>
<path d="M395 718.5 H398" stroke="#000" stroke-width="1"/>
<path d="M395 716.5 H398" stroke="#000" stroke-width="1"/>
<path d="M395 714.5 H398" stroke="#000" stroke-width="1"/>
<path d="M395 712.5 H398" stroke="#000" stroke-width="1"/>
<path d="M407.5 712 V945" stroke="#c4c4c4" stroke-width="1"/>
<path d="M407.5 945 V950.5" stroke="#000" stroke-width="1"/>
<text x="407.5" y="965" text-anchor="middle" letter-spacing="-0.3">0</text>
<path d="M481.5 712 V945" stroke="#c4c4c4" stroke-width="1"/>
<path d="M481.5 945 V950.5" stroke="#000" stroke-width="1"/>
<text x="481.5" y="965" text-anchor="middle" letter-spacing="-0.3">50</text>
<path d="M554.5 712 V945" stroke="#c4c4c4" stroke-width="1"/>
<path d="M554.5 945 V950.5" stroke="#000" stroke-width="1"/>
<text x="554.5" y="965" text-anchor="middle" letter-spacing="-0.3">100</text>
<path d="M628.5 712 V945" stroke="#c4c4c4" stroke-width="1"/>
<path d="M628.5 945 V950.5" stroke="#000" stroke-width="1"/>
<text x="628.5" y="965" text-anchor="middle" letter-spacing="-0.3">150</text>
<path d="M701.5 712 V945" stroke="#c4c4c4" stroke-width="1"/>
<path d="M701.5 945 V950.5" stroke="#000" stroke-width="1"/>
<text x="701.5" y="965" text-anchor="middle" letter-spacing="-0.3">200</text>
<path d="M775.5 712 V945" stroke="#c4c4c4" stroke-width="1"/>
<path d="M775.5 945 V950.5" stroke="#000" stroke-width="1"/>
<text x="775.5" y="965" text-anchor="middle" letter-spacing="-0.3">250</text>
<path d="M406.3 729.3 L407.8 729.3 L407.8 740.0 L409.2 740.0 L409.2 746.0 L410.7 746.0 L410.7 751.0 L412.2 751.0 L412.2 762.0 L413.7 762.0 L413.7 772.6 L415.1 772.6 L415.1 783.0 L416.6 783.0 L416.6 792.5 L418.1 792.5 L418.1 799.0 L419.5 799.0 L419.5 804.4 L421.0 804.4 L421.0 808.0 L422.5 808.0 L422.5 811.5 L424.0 811.5 L424.0 814.5 L425.4 814.5 L425.4 816.8 L426.9 816.8 L426.9 819.0 L428.4 819.0 L428.4 820.2 L429.8 820.2 L429.8 821.3 L431.3 821.3 L431.3 822.5 L432.8 822.5 L432.8 823.3 L434.3 823.3 L434.3 824.2 L435.7 824.2 L435.7 825.9 L437.2 825.9 L437.2 825.8 L438.7 825.8 L438.7 826.3 L440.1 826.3 L440.1 825.9 L441.6 825.9 L441.6 827.4 L443.1 827.4 L443.1 827.8 L444.6 827.8 L444.6 828.5 L446.0 828.5 L446.0 828.7 L447.5 828.7 L447.5 829.5 L449.0 829.5 L449.0 829.5 L450.4 829.5 L450.4 829.4 L451.9 829.4 L451.9 830.8 L453.4 830.8 L453.4 831.1 L454.9 831.1 L454.9 831.8 L456.3 831.8 L456.3 831.2 L457.8 831.2 L457.8 831.3 L459.3 831.3 L459.3 831.4 L460.7 831.4 L460.7 831.0 L462.2 831.0 L462.2 832.4 L463.7 832.4 L463.7 831.5 L465.2 831.5 L465.2 831.6 L466.6 831.6 L466.6 832.3 L468.1 832.3 L468.1 833.2 L469.6 833.2 L469.6 832.8 L471.1 832.8 L471.1 832.3 L472.5 832.3 L472.5 832.6 L474.0 832.6 L474.0 833.5 L475.5 833.5 L475.5 833.3 L476.9 833.3 L476.9 833.1 L478.4 833.1 L478.4 834.1 L479.9 834.1 L479.9 835.4 L481.4 835.4 L481.4 836.7 L482.8 836.7 L482.8 835.9 L484.3 835.9 L484.3 840.0 L485.8 840.0 L485.8 843.0 L487.2 843.0 L487.2 846.0 L488.7 846.0 L488.7 849.0 L490.2 849.0 L490.2 859.3 L491.7 859.3 L491.7 880.0 L493.1 880.0" fill="none" stroke="#04045c" stroke-width="2" stroke-linejoin="miter"/>
<rect x="398.5" y="711.5" width="394" height="234" fill="none" stroke="#000" stroke-width="1"/>
<text x="564" y="984" letter-spacing="-0.45">Brightness</text>
<text transform="translate(326 826) rotate(-90)" text-anchor="middle" letter-spacing="-0.45">Counts</text>
</svg>
<svg style="left:812px;top:396px" width="460" height="583" viewBox="812 396 460 583">
<defs><filter id="nz" x="0" y="0" width="100%" height="100%"><feTurbulence type="fractalNoise" baseFrequency="0.9" numOctaves="2" seed="4"/><feColorMatrix type="matrix" values="0 0 0 0 0  0 0 0 0 0  0 0 0 0 0  1.6 1.6 0 0 -1.62"/><feComposite in="SourceGraphic" operator="in"/></filter>
<radialGradient id="blob" cx="0.5" cy="0.5" r="0.5"><stop offset="0" stop-color="#f6f6f6" stop-opacity="1"/><stop offset="0.25" stop-color="#efefef" stop-opacity="0.97"/><stop offset="0.4" stop-color="#ececec" stop-opacity="0.86"/><stop offset="0.54" stop-color="#eee" stop-opacity="0.62"/><stop offset="0.68" stop-color="#eee" stop-opacity="0.34"/><stop offset="0.82" stop-color="#eee" stop-opacity="0.13"/><stop offset="0.93" stop-color="#eee" stop-opacity="0.04"/><stop offset="1" stop-color="#eee" stop-opacity="0"/></radialGradient><radialGradient id="halo" cx="0.5" cy="0.5" r="0.5"><stop offset="0" stop-color="#ccc" stop-opacity="0.3"/><stop offset="0.5" stop-color="#ccc" stop-opacity="0.18"/><stop offset="0.8" stop-color="#ccc" stop-opacity="0.06"/><stop offset="1" stop-color="#ccc" stop-opacity="0"/></radialGradient></defs>
<rect x="812" y="396" width="460" height="583" fill="#000"/>
<rect x="812" y="396" width="460" height="583" fill="#222" filter="url(#nz)"/>
<ellipse cx="984" cy="701" rx="76" ry="52" fill="url(#halo)"/>
<ellipse cx="994" cy="692" rx="64" ry="47" fill="url(#blob)"/>
<path d="M817.5 396 V979 M834.5 396 V979 M851.5 396 V979 M868.5 396 V979 M886.5 396 V979 M905.5 396 V979 M924.5 396 V979 M943.5 396 V979 M963.5 396 V979 M983.5 396 V979 M1005.5 396 V979 M1026.5 396 V979 M1050.5 396 V979 M1075.5 396 V979 M1100.5 396 V979 M1126.5 396 V979 M1155.5 396 V979 M1186.5 396 V979 M1218.5 396 V979 M1254.5 396 V979 " stroke="#25812a" stroke-width="1" fill="none" shape-rendering="crispEdges"/>
<path d="M812 1098.69 L1272 1205.69 M812 1078.25 L1272 1179.90 M812 1057.82 L1272 1154.11 M812 1037.38 L1272 1128.32 M812 1016.94 L1272 1102.53 M812 996.50 L1272 1076.74 M812 976.06 L1272 1050.95 M812 955.62 L1272 1025.16 M812 935.18 L1272 999.37 M812 914.74 L1272 973.58 M812 894.30 L1272 947.80 M812 873.86 L1272 922.01 M812 853.42 L1272 896.22 M812 832.98 L1272 870.43 M812 812.54 L1272 844.64 M812 792.10 L1272 818.85 M812 771.66 L1272 793.06 M812 751.22 L1272 767.27 M812 730.78 L1272 741.48 M812 710.34 L1272 715.69 M812 669.46 L1272 664.11 M812 649.02 L1272 638.32 M812 628.58 L1272 612.53 M812 608.14 L1272 586.74 M812 587.70 L1272 560.95 M812 567.26 L1272 535.16 M812 546.82 L1272 509.37 M812 526.38 L1272 483.58 M812 505.94 L1272 457.79 M812 485.50 L1272 432.00 M812 465.06 L1272 406.22 M812 444.62 L1272 380.43 M812 424.18 L1272 354.64 M812 403.74 L1272 328.85 M812 383.30 L1272 303.06 M812 362.86 L1272 277.27 M812 342.42 L1272 251.48 M812 321.98 L1272 225.69 M812 301.55 L1272 199.90 M812 281.11 L1272 174.11 " stroke="#25812a" stroke-width="1" fill="none" shape-rendering="crispEdges"/>
<path d="M1016 678 L1039 701 M1039 678 L1016 701" stroke="#25812a" stroke-width="1"/>
<rect x="1026" y="396" width="2" height="583" fill="#ff22ff"/>
<rect x="812" y="688" width="460" height="2" fill="#ff22ff"/>
</svg>
<div class="t" style="left:812.4px;top:980px;font-size:12px;letter-spacing:-0.826px;">Marker:</div>
<div class="t" style="left:861.8px;top:980px;font-size:12px;letter-spacing:-0.361px;">x =</div>
<div class="t" style="left:895.4px;top:980px;font-size:12px;letter-spacing:-0.501px;">0.0 mm (</div>
<div class="t" style="left:962.9px;top:980px;font-size:12px;letter-spacing:-0.889px;">0 px)</div>
<div class="t" style="left:1005.3px;top:980px;font-size:12px;letter-spacing:-0.788px;">y =</div>
<div class="t" style="left:1038.6px;top:980px;font-size:12px;letter-spacing:-0.539px;">0.0 mm (</div>
<div class="t" style="left:1105.3999999999999px;top:980px;font-size:12px;letter-spacing:-0.829px;">0 px)</div>
<div class="t" style="left:1148.5px;top:980px;font-size:12px;letter-spacing:-0.523px;">value = 38</div>
</div>
</body></html>
